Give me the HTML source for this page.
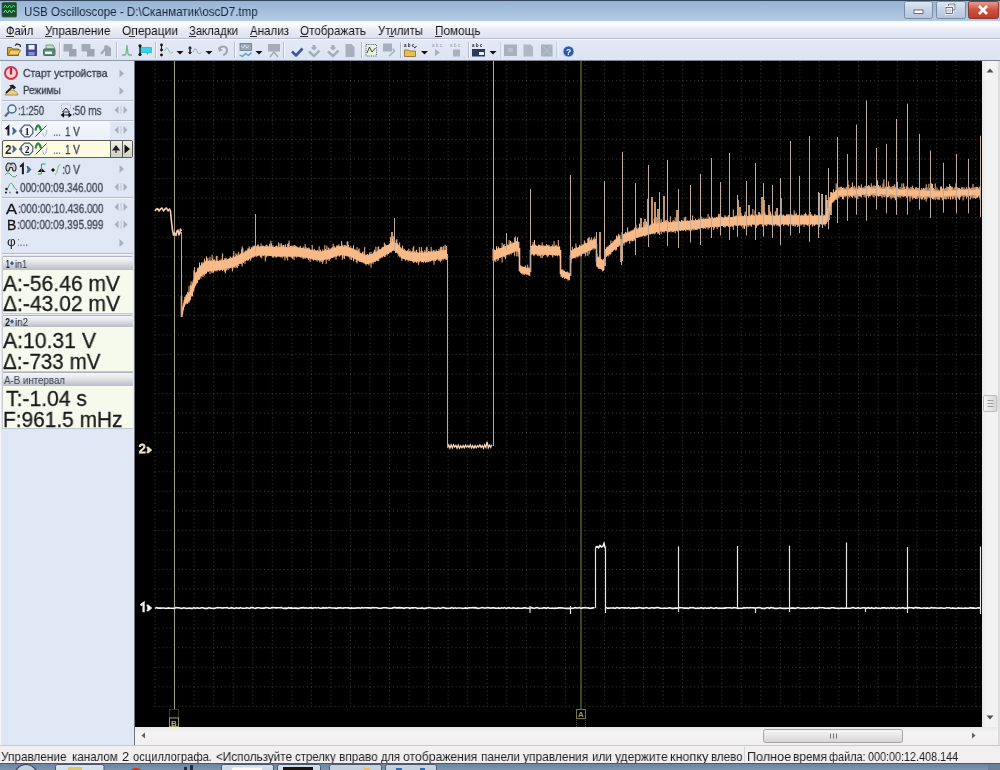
<!DOCTYPE html>
<html><head><meta charset="utf-8">
<style>
*{margin:0;padding:0;box-sizing:border-box}
html,body{width:1000px;height:770px;overflow:hidden;background:#dfe6f4;font-family:"Liberation Sans", sans-serif}
.a{position:absolute}
.t{white-space:nowrap;-webkit-font-smoothing:antialiased;will-change:transform}
</style></head><body>

<div class="a" style="left:0;top:0;width:1000px;height:21px;background:linear-gradient(#97b3d6,#a6bfdd 50%,#b4cbe4);border-top:1px solid #34455a"></div>
<div class="a t" style="left:24.3px;top:4.6px;font-size:13px;line-height:13px;color:#17263a;transform:scaleX(0.8903);transform-origin:0 0;">USB Oscilloscope - D:\Сканматик\oscD7.tmp</div>
<div class="a" style="left:0;top:21px;width:1000px;height:18px;background:linear-gradient(#f4f9fd,#fafcfe 20%,#e9ecf7 50%,#dde1f1);border-bottom:1px solid #b9bece"></div>
<div class="a t" style="left:5.7px;top:24.56px;font-size:12.8px;line-height:12.8px;color:#151515;transform:scaleX(0.8675);transform-origin:0 0;">Файл</div>
<div class="a" style="left:5.5px;top:36px;width:8px;height:1px;background:#333"></div>
<div class="a t" style="left:45px;top:24.56px;font-size:12.8px;line-height:12.8px;color:#151515;transform:scaleX(0.9205);transform-origin:0 0;">Управление</div>
<div class="a" style="left:45px;top:36px;width:6.5px;height:1px;background:#333"></div>
<div class="a t" style="left:122px;top:24.56px;font-size:12.8px;line-height:12.8px;color:#151515;transform:scaleX(0.9353);transform-origin:0 0;">Операции</div>
<div class="a" style="left:128.5px;top:36px;width:6.5px;height:1px;background:#333"></div>
<div class="a t" style="left:189px;top:24.56px;font-size:12.8px;line-height:12.8px;color:#151515;transform:scaleX(0.8845);transform-origin:0 0;">Закладки</div>
<div class="a" style="left:189px;top:36px;width:6.5px;height:1px;background:#333"></div>
<div class="a t" style="left:250px;top:24.56px;font-size:12.8px;line-height:12.8px;color:#151515;transform:scaleX(0.9025);transform-origin:0 0;">Анализ</div>
<div class="a" style="left:250px;top:36px;width:7px;height:1px;background:#333"></div>
<div class="a t" style="left:300px;top:24.56px;font-size:12.8px;line-height:12.8px;color:#151515;transform:scaleX(0.9129);transform-origin:0 0;">Отображать</div>
<div class="a" style="left:300px;top:36px;width:8px;height:1px;background:#333"></div>
<div class="a t" style="left:377.5px;top:24.56px;font-size:12.8px;line-height:12.8px;color:#151515;transform:scaleX(0.8854);transform-origin:0 0;">Утилиты</div>
<div class="a" style="left:389px;top:36px;width:5px;height:1px;background:#333"></div>
<div class="a t" style="left:434.5px;top:24.56px;font-size:12.8px;line-height:12.8px;color:#151515;transform:scaleX(0.9204);transform-origin:0 0;">Помощь</div>
<div class="a" style="left:434.5px;top:36px;width:7.5px;height:1px;background:#333"></div>
<div class="a" style="left:0;top:39px;width:1000px;height:21px;background:linear-gradient(#e4e9f6,#dce3f2);border-top:1px solid #f4f7fd"></div>
<div class="a" style="left:0;top:60px;width:135px;height:685px;background:#dfe6f4;border-top:1px solid #8e97a6;border-right:1px solid #6f7784"></div>
<div class="a" style="left:0;top:61px;width:1px;height:684px;background:#f4f6fa"></div>
<div class="a" style="left:2px;top:100px;width:131px;height:1px;background:#b5bcc8"></div>
<div class="a" style="left:2px;top:101px;width:131px;height:1px;background:#f2f5fa"></div>
<div class="a" style="left:2px;top:120.3px;width:131px;height:1px;background:#b5bcc8"></div>
<div class="a" style="left:2px;top:121.3px;width:131px;height:1px;background:#f2f5fa"></div>
<div class="a" style="left:2px;top:197.3px;width:131px;height:1px;background:#b5bcc8"></div>
<div class="a" style="left:2px;top:198.3px;width:131px;height:1px;background:#f2f5fa"></div>
<div class="a" style="left:2px;top:252.5px;width:131px;height:1px;background:#b5bcc8"></div>
<div class="a" style="left:2px;top:253.5px;width:131px;height:1px;background:#f2f5fa"></div>
<div class="a t" style="left:22.5px;top:67.79px;font-size:11px;line-height:11px;color:#363c4a;transform:scaleX(0.9429);transform-origin:0 0;-webkit-text-stroke:0.3px #363c4a;">Старт устройства</div>
<div class="a t" style="left:22.5px;top:85.09px;font-size:11px;line-height:11px;color:#363c4a;transform:scaleX(0.8967);transform-origin:0 0;-webkit-text-stroke:0.3px #363c4a;">Режимы</div>
<div class="a t" style="left:18px;top:105.34px;font-size:12px;line-height:12px;color:#404858;transform:scaleX(0.7792);transform-origin:0 0;-webkit-text-stroke:0.3px #404858;">:1:250</div>
<div class="a t" style="left:72px;top:105.34px;font-size:12px;line-height:12px;color:#404858;transform:scaleX(0.8191);transform-origin:0 0;-webkit-text-stroke:0.3px #404858;">:50 ms</div>
<div class="a" style="left:2px;top:122px;width:108px;height:18px;background:linear-gradient(#f4f7fc,#e9eff8)"></div>
<div class="a t" style="left:53px;top:125.94px;font-size:12px;line-height:12px;color:#404858;transform:scaleX(0.7998);transform-origin:0 0;">...</div>
<div class="a t" style="left:65px;top:125.54px;font-size:12px;line-height:12px;color:#404858;transform:scaleX(0.8217);transform-origin:0 0;-webkit-text-stroke:0.3px #404858;">1 V</div>
<div class="a" style="left:1.5px;top:140px;width:131px;height:17.5px;background:#fdfbe2;border:1px solid #5c5c58;border-radius:2px"></div>
<div class="a" style="left:110px;top:141px;width:22px;height:15.5px;background:linear-gradient(#f0f0e8,#cfcfc6);border-left:1px solid #5c5c58"></div>
<div class="a" style="left:121.5px;top:141px;width:1px;height:15.5px;background:#5c5c58"></div>
<div class="a t" style="left:4.5px;top:143.1px;font-size:13px;line-height:13px;color:#1a1e26;font-weight:bold;transform:scaleX(0.8991);transform-origin:0 0;">2</div>
<div class="a t" style="left:53px;top:143.94px;font-size:12px;line-height:12px;color:#404858;transform:scaleX(0.7998);transform-origin:0 0;">...</div>
<div class="a t" style="left:65px;top:143.74px;font-size:12px;line-height:12px;color:#404858;transform:scaleX(0.8217);transform-origin:0 0;-webkit-text-stroke:0.3px #404858;">1 V</div>
<div class="a t" style="left:61.5px;top:164.44px;font-size:12px;line-height:12px;color:#404858;transform:scaleX(0.8432);transform-origin:0 0;-webkit-text-stroke:0.3px #404858;">:0 V</div>
<div class="a t" style="left:20px;top:181.74px;font-size:12px;line-height:12px;color:#484e5a;transform:scaleX(0.8292);transform-origin:0 0;-webkit-text-stroke:0.35px #484e5a;">000:00:09.346.000</div>
<div class="a t" style="left:6px;top:201.55px;font-size:14px;line-height:14px;color:#151515;transform:scaleX(1.1779);transform-origin:0 0;-webkit-text-stroke:0.3px #151515;">A</div>
<div class="a t" style="left:17.5px;top:202.94px;font-size:12px;line-height:12px;color:#484e5a;transform:scaleX(0.8266);transform-origin:0 0;-webkit-text-stroke:0.35px #484e5a;">:000:00:10.436.000</div>
<div class="a t" style="left:7px;top:218.05px;font-size:14px;line-height:14px;color:#151515;transform:scaleX(0.9638);transform-origin:0 0;-webkit-text-stroke:0.3px #151515;">B</div>
<div class="a t" style="left:16.5px;top:219.44px;font-size:12px;line-height:12px;color:#484e5a;transform:scaleX(0.8363);transform-origin:0 0;-webkit-text-stroke:0.35px #484e5a;">:000:00:09.395.999</div>
<div class="a t" style="left:6.5px;top:234.67px;font-size:13.5px;line-height:13.5px;color:#1a1a1a;transform:scaleX(0.9710);transform-origin:0 0;">φ</div>
<div class="a t" style="left:17px;top:236.44px;font-size:12px;line-height:12px;color:#606878;transform:scaleX(0.8247);transform-origin:0 0;">:...</div>
<div class="a" style="left:2px;top:256.3px;width:131px;height:13.5px;background:linear-gradient(#f6f6f9,#e6e8ed 35%,#cdd0d7 70%,#b9bdc5);border-top:1px solid #b0b4bc;border-left:1px solid #c8ccd4;border-radius:2px 2px 0 0"></div>
<div class="a" style="left:2px;top:269.8px;width:131px;height:44.2px;background:#f5faec;border-left:1px solid #c8ccd4;border-bottom:1px solid #c4c8d0"></div>
<div class="a t" style="left:3px;top:272.88px;font-size:22px;line-height:22px;color:#1a1a1a;transform:scaleX(0.9568);transform-origin:0 0;-webkit-text-stroke:0.3px #1a1a1a;">A:-56.46 mV</div>
<div class="a t" style="left:3px;top:293.08px;font-size:22px;line-height:22px;color:#1a1a1a;transform:scaleX(0.9567);transform-origin:0 0;-webkit-text-stroke:0.3px #1a1a1a;">Δ:-43.02 mV</div>
<div class="a t" style="left:5.5px;top:258.51px;font-size:10.5px;line-height:10.5px;color:#1a1a1a;font-weight:bold;transform:scaleX(0.5993);transform-origin:0 0;">1</div>
<div class="a t" style="left:15px;top:258.51px;font-size:10.5px;line-height:10.5px;color:#2a3040;transform:scaleX(0.8564);transform-origin:0 0;">in1</div>
<div class="a" style="left:2px;top:314.5px;width:131px;height:12.5px;background:linear-gradient(#f6f6f9,#e6e8ed 35%,#cdd0d7 70%,#b9bdc5);border-top:1px solid #b0b4bc;border-left:1px solid #c8ccd4;border-radius:2px 2px 0 0"></div>
<div class="a" style="left:2px;top:327px;width:131px;height:44.5px;background:#f5faec;border-left:1px solid #c8ccd4;border-bottom:1px solid #c4c8d0"></div>
<div class="a t" style="left:3px;top:330.38px;font-size:22px;line-height:22px;color:#1a1a1a;transform:scaleX(0.9625);transform-origin:0 0;-webkit-text-stroke:0.3px #1a1a1a;">A:10.31 V</div>
<div class="a t" style="left:3px;top:350.88px;font-size:22px;line-height:22px;color:#1a1a1a;transform:scaleX(0.9379);transform-origin:0 0;-webkit-text-stroke:0.3px #1a1a1a;">Δ:-733 mV</div>
<div class="a t" style="left:4.5px;top:316.71px;font-size:10.5px;line-height:10.5px;color:#1a1a1a;font-weight:bold;transform:scaleX(0.8562);transform-origin:0 0;">2</div>
<div class="a t" style="left:15px;top:316.71px;font-size:10.5px;line-height:10.5px;color:#2a3040;transform:scaleX(0.9277);transform-origin:0 0;">in2</div>
<div class="a" style="left:2px;top:372px;width:131px;height:13.5px;background:linear-gradient(#f6f6f9,#e6e8ed 35%,#cdd0d7 70%,#b9bdc5);border-top:1px solid #b0b4bc;border-left:1px solid #c8ccd4;border-radius:2px 2px 0 0"></div>
<div class="a" style="left:2px;top:385.5px;width:131px;height:43px;background:#f5faec;border-left:1px solid #c8ccd4;border-bottom:1px solid #c4c8d0"></div>
<div class="a t" style="left:5.5px;top:388.38px;font-size:22px;line-height:22px;color:#1a1a1a;transform:scaleX(0.9601);transform-origin:0 0;-webkit-text-stroke:0.3px #1a1a1a;">T:-1.04 s</div>
<div class="a t" style="left:3px;top:408.78px;font-size:22px;line-height:22px;color:#1a1a1a;transform:scaleX(0.9489);transform-origin:0 0;-webkit-text-stroke:0.3px #1a1a1a;">F:961.5 mHz</div>
<div class="a t" style="left:3.5px;top:374.71px;font-size:10.5px;line-height:10.5px;color:#3a4050;transform:scaleX(0.9259);transform-origin:0 0;">A-B интервал</div>
<svg class="a" style="left:0;top:0" width="140" height="400"><path d="M10 263.3 l2 -2.3 l2 2.3 l-2 2.3z" fill="#3a5a90"/><path d="M10 321.5 l2 -2.3 l2 2.3 l-2 2.3z" fill="#3a5a90"/></svg>
<svg class="a" style="left:0;top:0" width="1000" height="770" viewBox="0 0 1000 770">
<rect x="135" y="61" width="847" height="666" fill="#000"/>
<g stroke="#404040" stroke-width="1" fill="none">
<line x1="155.04" y1="61" x2="155.04" y2="707" stroke-dasharray="1 2.91" stroke-dashoffset="3.71"/>
<line x1="174.58" y1="61" x2="174.58" y2="707" stroke-dasharray="1 2.91" stroke-dashoffset="3.71"/>
<line x1="194.12" y1="61" x2="194.12" y2="707" stroke-dasharray="1 2.91" stroke-dashoffset="3.71"/>
<line x1="213.66" y1="61" x2="213.66" y2="707" stroke-dasharray="1 2.91" stroke-dashoffset="3.71"/>
<line x1="233.2" y1="61" x2="233.2" y2="707" stroke-dasharray="1 2.91" stroke-dashoffset="3.71"/>
<line x1="252.74" y1="61" x2="252.74" y2="707" stroke-dasharray="1 2.91" stroke-dashoffset="3.71"/>
<line x1="272.28" y1="61" x2="272.28" y2="707" stroke-dasharray="1 2.91" stroke-dashoffset="3.71"/>
<line x1="291.82" y1="61" x2="291.82" y2="707" stroke-dasharray="1 2.91" stroke-dashoffset="3.71"/>
<line x1="311.36" y1="61" x2="311.36" y2="707" stroke-dasharray="1 2.91" stroke-dashoffset="3.71"/>
<line x1="330.9" y1="61" x2="330.9" y2="707" stroke-dasharray="1 2.91" stroke-dashoffset="3.71"/>
<line x1="350.44" y1="61" x2="350.44" y2="707" stroke-dasharray="1 2.91" stroke-dashoffset="3.71"/>
<line x1="369.98" y1="61" x2="369.98" y2="707" stroke-dasharray="1 2.91" stroke-dashoffset="3.71"/>
<line x1="389.52" y1="61" x2="389.52" y2="707" stroke-dasharray="1 2.91" stroke-dashoffset="3.71"/>
<line x1="409.06" y1="61" x2="409.06" y2="707" stroke-dasharray="1 2.91" stroke-dashoffset="3.71"/>
<line x1="428.6" y1="61" x2="428.6" y2="707" stroke-dasharray="1 2.91" stroke-dashoffset="3.71"/>
<line x1="448.14" y1="61" x2="448.14" y2="707" stroke-dasharray="1 2.91" stroke-dashoffset="3.71"/>
<line x1="467.68" y1="61" x2="467.68" y2="707" stroke-dasharray="1 2.91" stroke-dashoffset="3.71"/>
<line x1="487.22" y1="61" x2="487.22" y2="707" stroke-dasharray="1 2.91" stroke-dashoffset="3.71"/>
<line x1="506.76" y1="61" x2="506.76" y2="707" stroke-dasharray="1 2.91" stroke-dashoffset="3.71"/>
<line x1="526.3" y1="61" x2="526.3" y2="707" stroke-dasharray="1 2.91" stroke-dashoffset="3.71"/>
<line x1="545.84" y1="61" x2="545.84" y2="707" stroke-dasharray="1 2.91" stroke-dashoffset="3.71"/>
<line x1="565.38" y1="61" x2="565.38" y2="707" stroke-dasharray="1 2.91" stroke-dashoffset="3.71"/>
<line x1="584.92" y1="61" x2="584.92" y2="707" stroke-dasharray="1 2.91" stroke-dashoffset="3.71"/>
<line x1="604.46" y1="61" x2="604.46" y2="707" stroke-dasharray="1 2.91" stroke-dashoffset="3.71"/>
<line x1="624" y1="61" x2="624" y2="707" stroke-dasharray="1 2.91" stroke-dashoffset="3.71"/>
<line x1="643.54" y1="61" x2="643.54" y2="707" stroke-dasharray="1 2.91" stroke-dashoffset="3.71"/>
<line x1="663.08" y1="61" x2="663.08" y2="707" stroke-dasharray="1 2.91" stroke-dashoffset="3.71"/>
<line x1="682.62" y1="61" x2="682.62" y2="707" stroke-dasharray="1 2.91" stroke-dashoffset="3.71"/>
<line x1="702.16" y1="61" x2="702.16" y2="707" stroke-dasharray="1 2.91" stroke-dashoffset="3.71"/>
<line x1="721.7" y1="61" x2="721.7" y2="707" stroke-dasharray="1 2.91" stroke-dashoffset="3.71"/>
<line x1="741.24" y1="61" x2="741.24" y2="707" stroke-dasharray="1 2.91" stroke-dashoffset="3.71"/>
<line x1="760.78" y1="61" x2="760.78" y2="707" stroke-dasharray="1 2.91" stroke-dashoffset="3.71"/>
<line x1="780.32" y1="61" x2="780.32" y2="707" stroke-dasharray="1 2.91" stroke-dashoffset="3.71"/>
<line x1="799.86" y1="61" x2="799.86" y2="707" stroke-dasharray="1 2.91" stroke-dashoffset="3.71"/>
<line x1="819.4" y1="61" x2="819.4" y2="707" stroke-dasharray="1 2.91" stroke-dashoffset="3.71"/>
<line x1="838.94" y1="61" x2="838.94" y2="707" stroke-dasharray="1 2.91" stroke-dashoffset="3.71"/>
<line x1="858.48" y1="61" x2="858.48" y2="707" stroke-dasharray="1 2.91" stroke-dashoffset="3.71"/>
<line x1="878.02" y1="61" x2="878.02" y2="707" stroke-dasharray="1 2.91" stroke-dashoffset="3.71"/>
<line x1="897.56" y1="61" x2="897.56" y2="707" stroke-dasharray="1 2.91" stroke-dashoffset="3.71"/>
<line x1="917.1" y1="61" x2="917.1" y2="707" stroke-dasharray="1 2.91" stroke-dashoffset="3.71"/>
<line x1="936.64" y1="61" x2="936.64" y2="707" stroke-dasharray="1 2.91" stroke-dashoffset="3.71"/>
<line x1="956.18" y1="61" x2="956.18" y2="707" stroke-dasharray="1 2.91" stroke-dashoffset="3.71"/>
<line x1="975.72" y1="61" x2="975.72" y2="707" stroke-dasharray="1 2.91" stroke-dashoffset="3.71"/>
<line x1="154.54" y1="80.75" x2="981" y2="80.75" stroke-dasharray="1 2.91"/>
<line x1="154.54" y1="100.3" x2="981" y2="100.3" stroke-dasharray="1 2.91"/>
<line x1="154.54" y1="119.85" x2="981" y2="119.85" stroke-dasharray="1 2.91"/>
<line x1="154.54" y1="139.4" x2="981" y2="139.4" stroke-dasharray="1 2.91"/>
<line x1="154.54" y1="158.95" x2="981" y2="158.95" stroke-dasharray="1 2.91"/>
<line x1="154.54" y1="178.5" x2="981" y2="178.5" stroke-dasharray="1 2.91"/>
<line x1="154.54" y1="198.05" x2="981" y2="198.05" stroke-dasharray="1 2.91"/>
<line x1="154.54" y1="217.6" x2="981" y2="217.6" stroke-dasharray="1 2.91"/>
<line x1="154.54" y1="237.15" x2="981" y2="237.15" stroke-dasharray="1 2.91"/>
<line x1="154.54" y1="256.7" x2="981" y2="256.7" stroke-dasharray="1 2.91"/>
<line x1="154.54" y1="276.25" x2="981" y2="276.25" stroke-dasharray="1 2.91"/>
<line x1="154.54" y1="295.8" x2="981" y2="295.8" stroke-dasharray="1 2.91"/>
<line x1="154.54" y1="315.35" x2="981" y2="315.35" stroke-dasharray="1 2.91"/>
<line x1="154.54" y1="334.9" x2="981" y2="334.9" stroke-dasharray="1 2.91"/>
<line x1="154.54" y1="354.45" x2="981" y2="354.45" stroke-dasharray="1 2.91"/>
<line x1="154.54" y1="374" x2="981" y2="374" stroke-dasharray="1 2.91"/>
<line x1="154.54" y1="393.55" x2="981" y2="393.55" stroke-dasharray="1 2.91"/>
<line x1="154.54" y1="413.1" x2="981" y2="413.1" stroke-dasharray="1 2.91"/>
<line x1="154.54" y1="432.65" x2="981" y2="432.65" stroke-dasharray="1 2.91"/>
<line x1="154.54" y1="452.2" x2="981" y2="452.2" stroke-dasharray="1 2.91"/>
<line x1="154.54" y1="471.75" x2="981" y2="471.75" stroke-dasharray="1 2.91"/>
<line x1="154.54" y1="491.3" x2="981" y2="491.3" stroke-dasharray="1 2.91"/>
<line x1="154.54" y1="510.85" x2="981" y2="510.85" stroke-dasharray="1 2.91"/>
<line x1="154.54" y1="530.4" x2="981" y2="530.4" stroke-dasharray="1 2.91"/>
<line x1="154.54" y1="549.95" x2="981" y2="549.95" stroke-dasharray="1 2.91"/>
<line x1="154.54" y1="569.5" x2="981" y2="569.5" stroke-dasharray="1 2.91"/>
<line x1="154.54" y1="589.05" x2="981" y2="589.05" stroke-dasharray="1 2.91"/>
<line x1="154.54" y1="608.6" x2="981" y2="608.6" stroke-dasharray="1 2.91"/>
<line x1="154.54" y1="628.15" x2="981" y2="628.15" stroke-dasharray="1 2.91"/>
<line x1="154.54" y1="647.7" x2="981" y2="647.7" stroke-dasharray="1 2.91"/>
<line x1="154.54" y1="667.25" x2="981" y2="667.25" stroke-dasharray="1 2.91"/>
<line x1="154.54" y1="686.8" x2="981" y2="686.8" stroke-dasharray="1 2.91"/>
<line x1="154.54" y1="706.35" x2="981" y2="706.35" stroke-dasharray="1 2.91"/>
</g>
<line x1="174.5" y1="61" x2="174.5" y2="709" stroke="#9c9a88" stroke-width="1.1"/>
<line x1="581" y1="61" x2="581" y2="709" stroke="#6e6e3c" stroke-width="1.2"/>
<polyline points="447.5,447.8 448.7,445 449.9,448.1 451.1,444.8 452.3,448 453.5,444.8 454.7,447.1 455.9,445.3 457.1,448.2 458.3,445.1 459.5,448.2 460.7,445.8 461.9,447.7 463.1,445.6 464.3,447.8 465.5,445.2 466.7,447.1 467.9,445.6 469.1,447.4 470.3,444.8 471.5,448 472.7,445.7 473.9,448.1 475.1,445.7 476.3,447.8 477.5,445.7 478.7,447.1 479.9,444.9 481.1,447.4 482.3,445.6 483.5,448.3 484.7,444.9 485.9,447.4 487.1,442 488.3,447.7 489.5,445.1 490.7,447.3 491.9,444.8" fill="none" stroke="#f4d4bc" stroke-width="1.3"/>
<polyline points="155,211 156,209.5 157.5,208.5 159,211 160.5,209 162,208 163.5,211 165,209 166.5,208 168,211 169.5,209 170.5,211 171.5,222 172.5,230 173.5,235 174.5,233 176,235.5 177,231 178,230 179,235 180,233 180.5,229 181.5,231" fill="none" stroke="#f4cdb0" stroke-width="1.6" stroke-linejoin="round"/>
<path d="M182 311.2 L184 301.3 L186 295.3 L188 293.2 L190 291.1 L192 284.6 L194 278 L196 273.1 L198 269.7 L200 266.4 L202 264.8 L204 263.3 L206 261.7 L208 261 L210 261.1 L212 261.2 L214 261.4 L216 261.3 L218 261 L220 260.7 L222 260.4 L224 260.1 L226 259.7 L228 259.1 L230 258.5 L232 257.9 L234 257.3 L236 256.5 L238 255.5 L240 254.5 L242 253.5 L244 252.5 L246 251.4 L248 250.3 L250 249.3 L252 248.2 L254 247.1 L256 246.5 L258 246.5 L260 246.5 L262 246.5 L264 246.5 L266 246.6 L268 246.7 L270 246.9 L272 247 L274 247.1 L276 247.3 L278 247.4 L280 247.5 L282 247.6 L284 247.6 L286 247.6 L288 247.6 L290 247.6 L292 247.6 L294 247.6 L296 247.6 L298 247.6 L300 247.6 L302 248 L304 248.4 L306 248.8 L308 249.2 L310 249.6 L312 250 L314 250.4 L316 250.8 L318 251.2 L320 251.6 L322 251.2 L324 250.8 L326 250.4 L328 250 L330 249.6 L332 248.9 L334 248.2 L336 247.5 L338 246.8 L340 246.1 L342 246.4 L344 246.7 L346 247 L348 247.4 L350 247.7 L352 248.7 L354 249.7 L356 250.7 L358 251.7 L360 252.6 L362 253.4 L364 254.3 L366 255.2 L368 255.3 L370 254.6 L372 253.8 L374 253.1 L376 252.1 L378 250.8 L380 249.6 L382 248.3 L384 247.1 L386 246 L388 244.9 L390 243.7 L392 242.7 L394 241.7 L396 243.1 L398 244.9 L400 247.3 L402 249.7 L404 250.3 L406 250.9 L408 251.5 L410 252.1 L412 252.7 L414 252.8 L416 252.8 L418 252.8 L420 252.8 L422 252.8 L424 252.8 L426 252.6 L428 252.4 L430 252.1 L432 251.8 L434 251.6 L436 251.3 L438 251.1 L440 250.8 L442 250.5 L444 250.2 L446 249.9 L447 249.8 L447 258.2 L446 258.3 L444 258.6 L442 258.9 L440 259.2 L438 259.5 L436 259.7 L434 260 L432 260.3 L430 260.6 L428 260.8 L426 261.1 L424 261.2 L422 261.2 L420 261.2 L418 261.2 L416 261.2 L414 261.2 L412 261.3 L410 260.7 L408 260.1 L406 259.5 L404 258.9 L402 258.3 L400 255.9 L398 253.5 L396 251.6 L394 250.3 L392 251.3 L390 252.3 L388 253.4 L386 254.6 L384 255.7 L382 256.9 L380 258.2 L378 259.4 L376 260.7 L374 261.7 L372 262.4 L370 263.2 L368 263.9 L366 263.9 L364 263 L362 262.1 L360 261.2 L358 260.3 L356 259.3 L354 258.3 L352 257.3 L350 256.3 L348 256 L346 255.8 L344 255.5 L342 255.2 L340 254.9 L338 255.6 L336 256.3 L334 257 L332 257.7 L330 258.4 L328 258.8 L326 259.2 L324 259.6 L322 260 L320 260.4 L318 260 L316 259.6 L314 259.2 L312 258.8 L310 258.4 L308 258 L306 257.6 L304 257.2 L302 256.8 L300 256.4 L298 256.4 L296 256.4 L294 256.4 L292 256.4 L290 256.4 L288 256.4 L286 256.4 L284 256.4 L282 256.4 L280 256.5 L278 256.3 L276 256.2 L274 256.1 L272 255.9 L270 255.8 L268 255.7 L266 255.5 L264 255.5 L262 255.5 L260 255.5 L258 255.5 L256 255.5 L254 256 L252 257.1 L250 258.2 L248 259.4 L246 260.5 L244 261.5 L242 262.5 L240 263.5 L238 264.5 L236 265.5 L234 266.3 L232 266.9 L230 267.5 L228 268.1 L226 268.7 L224 269.2 L222 269.5 L220 269.8 L218 270.1 L216 270.4 L214 270.6 L212 270.8 L210 270.9 L208 271 L206 272 L204 273.9 L202 275.7 L200 277.6 L198 280.7 L196 283.7 L194 288.4 L192 294.6 L190 300.9 L188 302 L186 303.1 L184 308 L182 316.8ZM493 251.4 L495 250.6 L497 249.8 L499 248.9 L501 248.1 L503 247.3 L505 246.4 L507 245.6 L509 244.8 L511 243.9 L513 243.1 L515 242.3 L517 241.4 L519 243.4 L519 252.6 L517 250.6 L515 251.4 L513 252.2 L511 253.1 L509 253.9 L507 254.7 L505 255.6 L503 256.4 L501 257.2 L499 258.1 L497 258.9 L495 259.7 L493 260.6ZM520 265.9 L522 266.5 L524 267.1 L526 267.7 L528 268.2 L530 268.9 L530 275.1 L528 274.5 L526 273.9 L524 273.3 L522 272.8 L520 272.1ZM531 245.8 L533 245.9 L535 245.9 L537 246 L539 246.1 L541 246.1 L543 246.2 L545 246.3 L547 246.4 L549 246.4 L551 246.5 L553 246.6 L555 246.6 L557 246.7 L559 246.8 L560 246.8 L560 255.2 L559 255.2 L557 255.1 L555 255 L553 255 L551 254.9 L549 254.8 L547 254.8 L545 254.7 L543 254.6 L541 254.5 L539 254.5 L537 254.4 L535 254.3 L533 254.3 L531 254.2ZM561 269.9 L563 270.7 L565 271.6 L567 272.5 L569 273.4 L570 273.9 L570 280.1 L569 279.7 L567 278.8 L565 277.9 L563 277 L561 276.1ZM571 250.8 L573 249.8 L575 248.9 L577 247.9 L579 247 L581 246 L583 245 L585 244.1 L587 243.1 L589 242.2 L591 241.2 L593 240.2 L595 239.3 L596 238.8 L596 247.2 L595 247.7 L593 248.6 L591 249.6 L589 250.6 L587 251.5 L585 252.5 L583 253.4 L581 254.4 L579 255.4 L577 256.3 L575 257.3 L573 258.2 L571 259.2ZM597 257.1 L599 258.2 L601 259.4 L603 260.5 L604 261.1 L604 270.9 L603 270.3 L601 269.2 L599 268 L597 266.9ZM606 248.8 L608 246.9 L610 245.1 L612 243.2 L614 241.4 L616 239.5 L618 237.7 L620 235.8 L620 244.2 L618 246.1 L616 247.9 L614 249.8 L612 251.6 L610 253.5 L608 255.3 L606 257.2ZM622 234.8 L624 234.1 L626 233.4 L628 232.6 L630 231.9 L632 231.2 L634 230.5 L636 229.7 L638 229 L640 228.3 L642 227.8 L644 227.2 L646 226.7 L648 226.1 L650 225.6 L652 225 L654 224.5 L656 223.9 L658 223.4 L660 222.8 L662 222.7 L664 222.6 L666 222.5 L668 222.4 L670 222.3 L672 222.2 L674 222.1 L676 222 L678 221.9 L680 221.8 L682 221.6 L684 221.4 L686 221.2 L688 221 L690 220.8 L692 220.6 L694 220.4 L696 220.2 L698 220 L700 219.8 L702 219.6 L704 219.4 L706 219.1 L708 218.9 L710 218.7 L712 218.5 L714 218.2 L716 218 L718 217.8 L720 217.7 L722 217.6 L724 217.5 L726 217.4 L728 217.3 L730 217.2 L732 217.1 L734 217 L736 216.9 L738 216.8 L740 216.8 L742 216.7 L744 216.6 L746 216.5 L748 216.4 L750 216.3 L752 216.2 L754 216.1 L756 216 L758 215.9 L760 215.8 L762 215.8 L764 215.8 L766 215.8 L768 215.8 L770 215.8 L772 215.8 L774 215.8 L776 215.8 L778 215.8 L780 215.8 L782 215.8 L784 215.8 L786 215.8 L788 215.8 L790 215.8 L792 215.8 L794 215.8 L796 215.8 L798 215.8 L800 215.8 L802 215.8 L804 215.8 L806 215.8 L808 215.8 L810 215.8 L812 215.8 L814 215.8 L816 215.8 L818 215.8 L820 215.8 L822 215.8 L824 215.8 L826 215.8 L828 207.8 L830 199.1 L832 193.9 L834 192.2 L836 190.5 L838 188.8 L838 197.2 L836 198.9 L834 200.6 L832 202.3 L830 207.5 L828 216.2 L826 224.2 L824 224.2 L822 224.2 L820 224.2 L818 224.2 L816 224.2 L814 224.2 L812 224.2 L810 224.2 L808 224.2 L806 224.2 L804 224.2 L802 224.2 L800 224.2 L798 224.2 L796 224.2 L794 224.2 L792 224.2 L790 224.2 L788 224.2 L786 224.2 L784 224.2 L782 224.2 L780 224.2 L778 224.2 L776 224.2 L774 224.2 L772 224.2 L770 224.2 L768 224.2 L766 224.2 L764 224.2 L762 224.2 L760 224.2 L758 224.3 L756 224.4 L754 224.5 L752 224.6 L750 224.7 L748 224.8 L746 224.9 L744 225 L742 225.1 L740 225.2 L738 225.2 L736 225.3 L734 225.4 L732 225.5 L730 225.6 L728 225.7 L726 225.8 L724 225.9 L722 226 L720 226.1 L718 226.2 L716 226.4 L714 226.6 L712 226.9 L710 227.1 L708 227.3 L706 227.5 L704 227.8 L702 228 L700 228.2 L698 228.4 L696 228.6 L694 228.8 L692 229 L690 229.2 L688 229.4 L686 229.6 L684 229.8 L682 230 L680 230.2 L678 230.3 L676 230.4 L674 230.5 L672 230.6 L670 230.7 L668 230.8 L666 230.9 L664 231 L662 231.1 L660 231.2 L658 231.8 L656 232.3 L654 232.8 L652 233.4 L650 233.9 L648 234.5 L646 235 L644 235.6 L642 236.1 L640 236.7 L638 237.4 L636 238.1 L634 238.9 L632 239.6 L630 240.3 L628 241 L626 241.8 L624 242.5 L622 243.2ZM838 190.4 L840 190.3 L842 190.2 L844 190.1 L846 190 L848 189.8 L850 189.7 L852 189.6 L854 189.5 L856 189.4 L858 189.3 L860 189.2 L862 189.1 L864 189 L866 188.8 L868 188.7 L870 188.6 L872 188.5 L874 188.4 L876 188.5 L878 188.6 L880 188.7 L882 188.9 L884 189 L886 189.1 L888 189.2 L890 189.3 L892 189.4 L894 189.6 L896 189.7 L898 189.8 L900 189.9 L902 190 L904 190.1 L906 190.1 L908 190.2 L910 190.3 L912 190.4 L914 190.5 L916 190.5 L918 190.6 L920 190.7 L922 190.8 L924 190.8 L926 190.9 L928 191 L930 191.1 L932 191.2 L934 191.2 L936 191.3 L938 191.4 L940 191.3 L942 191.1 L944 191 L946 190.9 L948 190.7 L950 190.6 L952 190.4 L954 190.3 L956 190.2 L958 190 L960 189.9 L962 189.9 L964 189.9 L966 189.9 L968 189.9 L970 189.9 L972 189.9 L974 189.9 L976 189.9 L978 189.9 L980 189.9 L981 189.9 L981 195.1 L980 195.1 L978 195.1 L976 195.1 L974 195.1 L972 195.1 L970 195.1 L968 195.1 L966 195.1 L964 195.1 L962 195.1 L960 195.1 L958 195.2 L956 195.4 L954 195.5 L952 195.6 L950 195.8 L948 195.9 L946 196.1 L944 196.2 L942 196.3 L940 196.5 L938 196.6 L936 196.5 L934 196.4 L932 196.4 L930 196.3 L928 196.2 L926 196.1 L924 196 L922 196 L920 195.9 L918 195.8 L916 195.7 L914 195.7 L912 195.6 L910 195.5 L908 195.4 L906 195.3 L904 195.3 L902 195.2 L900 195.1 L898 195 L896 194.9 L894 194.8 L892 194.6 L890 194.5 L888 194.4 L886 194.3 L884 194.2 L882 194.1 L880 193.9 L878 193.8 L876 193.7 L874 193.6 L872 193.7 L870 193.8 L868 193.9 L866 194 L864 194.2 L862 194.3 L860 194.4 L858 194.5 L856 194.6 L854 194.7 L852 194.8 L850 194.9 L848 195 L846 195.2 L844 195.3 L842 195.4 L840 195.5 L838 195.6Z" fill="#f8ba88"/>
<path d="M182 311.1V317.1M182.7 306.4V314.1M183.4 303.4V309.9M184.1 300.1V306.7M184.8 296.8V305M185.5 296.8V302.8M186.2 295V304.2M186.9 294.1V303.3M187.6 291.8V304M188.3 293.1V301.3M189 286.1V302.9M189.7 292.8V300.4M190.4 285V299.6M191.1 281.4V296.3M191.8 286.2V294.7M192.5 283.7V296.4M193.2 280.3V292.1M193.9 270.5V291M194.6 267.1V287.8M195.3 272.8V286.3M196 272.1V284.5M196.7 271.6V283.4M197.4 268.5V283.2M198.1 267.5V279.7M198.8 267.6V279.5M199.5 262.5V279.6M200.2 266.7V276.8M200.9 265.1V278.6M201.6 262.5V275.3M202.3 263.4V275.3M203 262.1V277.1M203.7 262.8V273.2M204.4 258.7V275.6M205.1 261.1V274.1M205.8 260.6V274.1M206.5 256.4V273.5M207.2 259.2V271.2M207.9 257.9V271.9M208.6 262.1V271.9M209.3 259.9V270.9M210 257V274.2M210.7 260.9V270.3M211.4 260.5V272.6M212.1 254.7V270.1M212.8 258.2V273.2M213.5 260V272.4M214.2 259.2V270.3M214.9 260V271.6M215.6 261.8V270.6M216.3 255.9V270.7M217 256V271.5M217.7 260.5V269.9M218.4 260.8V268.9M219.1 262V270.7M219.8 259.9V271.1M220.5 261.3V270M221.2 258.7V268.9M221.9 260V270.2M222.6 253.4V271M223.3 261.1V269.5M224 260.2V269.7M224.7 258.2V271.7M225.4 258.5V273.4M226.1 257.8V270.6M226.8 259.7V270.1M227.5 260.2V268.4M228.2 258.7V269.8M228.9 259.5V267.7M229.6 258.2V268.7M230.3 256.6V268M231 257.8V266.9M231.7 257.6V268.4M232.4 257.8V271.5M233.1 255.7V268.3M233.8 250.9V267M234.5 257.1V267.5M235.2 255.9V264.8M235.9 253.3V268.1M236.6 254.8V266.8M237.3 256.5V268.3M238 253.7V263.9M238.7 251.8V266M239.4 255.3V263.2M240.1 254.5V263.7M240.8 253.3V263.9M241.5 249.5V264.2M242.2 246.3V266.6M242.9 248.1V261.2M243.6 253.7V263.1M244.3 253.2V261.5M245 251.1V263.8M245.7 250.5V261M246.4 252.2V259.1M247.1 250V259M247.8 248.5V261.2M248.5 248.5V260.2M249.2 246.4V259.3M249.9 250V258.5M250.6 249.6V260.7M251.3 247.2V258.5M252 248.1V257.8M252.7 246.5V256.3M253.4 246.2V257.7M254.1 245.5V256.9M254.8 245.9V256.6M255.5 247.8V255.3M256.2 247.1V257.2M256.9 245.7V256M257.6 244.6V256.3M258.3 244.7V254.3M259 246.7V255.5M259.7 247.5V255M260.4 246.2V257.3M261.1 243.5V256.8M261.8 246.2V258.3M262.5 245.8V254.4M263.2 245.6V256.1M263.9 246V255.1M264.6 247.6V255M265.3 246.6V261.5M266 244.9V254.5M266.7 244.6V257.4M267.4 245.7V255.8M268.1 246.1V254.8M268.8 247.4V255.5M269.5 243.8V255.9M270.2 245.7V256.2M270.9 240.8V255.3M271.6 243.3V255.8M272.3 246.4V257M273 245.2V257.7M273.7 247.5V257.4M274.4 248.2V255.1M275.1 246.5V256.6M275.8 246.1V257.6M276.5 245.5V257.4M277.2 246.1V256.2M277.9 247.6V256.8M278.6 242.5V256.3M279.3 247V256.7M280 243.6V255.8M280.7 246.4V257.4M281.4 243.3V256.3M282.1 245.9V258.2M282.8 245.3V256.1M283.5 245.1V256M284.2 245.5V256.4M284.9 247.1V260.4M285.6 244.3V256.1M286.3 247V258.2M287 248.6V256.9M287.7 243.9V260.5M288.4 243.1V255.9M289.1 240.5V256.4M289.8 247.3V256.9M290.5 245.9V256.5M291.2 246.1V257.7M291.9 245.8V257.2M292.6 246.3V258.9M293.3 245.4V256.4M294 247.3V260.1M294.7 245V255.7M295.4 245.7V255.5M296.1 246.4V257M296.8 246.4V257.6M297.5 247.3V256M298.2 247.8V256.9M298.9 248.1V255.3M299.6 247.6V256.8M300.3 245.8V257.3M301 247.9V257.9M301.7 248.3V256M302.4 247.7V257.6M303.1 247.8V259.2M303.8 246.5V258.5M304.5 249.4V257.6M305.2 244.1V258.9M305.9 247.1V257.9M306.6 248.5V257M307.3 248V256.9M308 248.3V258.9M308.7 247.5V260.1M309.4 248.5V257.8M310.1 250.8V262M310.8 250.1V258.5M311.5 250.1V258.7M312.2 245V259.9M312.9 249.2V258.9M313.6 251.3V260.7M314.3 248.8V259.9M315 250.6V258.4M315.7 250.4V260.3M316.4 250.9V260.2M317.1 250.1V261.6M317.8 249.8V258.8M318.5 252.2V260M319.2 246.4V260.9M319.9 251.1V262.5M320.6 249.6V260.6M321.3 252V261.9M322 251.7V260.5M322.7 249.4V263.9M323.4 251.8V261.3M324.1 250.3V259.1M324.8 245.1V260.1M325.5 249V258.8M326.2 251V263.9M326.9 245.7V259.8M327.6 250.2V259.6M328.3 247.7V259.1M329 247.7V261.1M329.7 250.5V260.2M330.4 249.4V258.9M331.1 248.1V258.3M331.8 247.6V257.8M332.5 247.2V257.9M333.2 243.6V257M333.9 247.2V257.6M334.6 246.2V255.7M335.3 247.8V255.4M336 247.7V259.6M336.7 245.5V256.9M337.4 245.8V255.2M338.1 245.2V255.9M338.8 244.3V254M339.5 247.4V256.6M340.2 246.3V255.5M340.9 246.6V255.3M341.6 240.9V254.5M342.3 245.7V259.9M343 244.7V258.1M343.7 247.8V254.5M344.4 245.2V259.1M345.1 244.9V255.8M345.8 245.7V255.1M346.5 245.9V255.7M347.2 241.3V255.4M347.9 241.7V256.8M348.6 244.8V256.5M349.3 247.5V257.5M350 248.1V259.5M350.7 246.2V255.6M351.4 248.4V260M352.1 247.9V257.3M352.8 248.7V258.1M353.5 245.3V261.4M354.2 250.3V258.6M354.9 248.9V259.7M355.6 250.2V258M356.3 250.1V262M357 247.1V263.5M357.7 251V260.7M358.4 249.7V259.4M359.1 248.4V261.7M359.8 253.2V262M360.5 253.5V261.5M361.2 254.2V262M361.9 254.2V262.5M362.6 251.7V261.6M363.3 255V261.6M364 251.4V263.4M364.7 247.1V263.2M365.4 256.1V264.1M366.1 254.4V265.4M366.8 255.4V264.2M367.5 254.1V263.6M368.2 254.6V263.3M368.9 254.8V265.4M369.6 252.4V263.3M370.3 254.4V261.9M371 251.8V267.6M371.7 254V263.7M372.4 254.8V262M373.1 253.6V263.8M373.8 251.5V261.1M374.5 249.7V261.9M375.2 251.3V262M375.9 246.6V261.1M376.6 251.9V259.7M377.3 250.7V261.1M378 247.1V261M378.7 246.2V261.2M379.4 249.3V257.5M380.1 249.9V257.4M380.8 249.7V258.5M381.5 248.6V256.5M382.2 246.8V257.7M382.9 247.3V256.4M383.6 247.1V255.7M384.3 242.7V257M385 243.9V256.9M385.7 245V255.4M386.4 245.7V254M387.1 245.3V255.5M387.8 245.2V253.6M388.5 245.1V254M389.2 244.2V252.3M389.9 243.3V253M390.6 236.9V251.8M391.3 242.1V252.5M392 241.4V250.5M392.7 238.4V250.8M393.4 242.3V250.1M394.1 242.6V249.3M394.8 243.1V251M395.5 243.4V253M396.2 239.7V253M396.9 239.2V252M397.6 243.1V253.5M398.3 244.6V255.8M399 245.3V254.2M399.7 242.4V257.3M400.4 247.1V256.3M401.1 249.7V258.1M401.8 247.8V261.1M402.5 245.7V258.3M403.2 250.4V258.6M403.9 248.5V258.8M404.6 249.2V258.3M405.3 250.5V260.9M406 251.4V260.1M406.7 251.2V259.2M407.4 250.2V258.9M408.1 252.2V261.5M408.8 248.7V260.3M409.5 251.3V260.1M410.2 250.4V260.8M410.9 253V260.3M411.6 251.6V261M412.3 251V260.1M413 247.6V262.3M413.7 246.1V263M414.4 251.8V262.2M415.1 250.7V261.2M415.8 252.4V262M416.5 249.7V262.7M417.2 252.2V262.6M417.9 252.7V260.1M418.6 253V264.9M419.3 247.1V262.3M420 251.1V260.7M420.7 253.4V260.9M421.4 247.1V262.3M422.1 250.5V262M422.8 251.4V261.9M423.5 253.6V262.6M424.2 251.6V261.3M424.9 249.9V261.6M425.6 252.1V262.7M426.3 247.5V262.1M427 246.6V262.4M427.7 252.9V262.2M428.4 251V262M429.1 253.2V262.1M429.8 250.9V260.7M430.5 252.7V261.4M431.2 246.9V260.7M431.9 250.7V260.8M432.6 252.5V260.1M433.3 250.1V261.4M434 250.2V264.8M434.7 252.1V260.6M435.4 252V261.1M436.1 249.4V260.4M436.8 251.9V258.8M437.5 251.9V258.7M438.2 251.2V258.8M438.9 248.9V260.9M439.6 250.8V260.5M440.3 247.4V262.2M441 246.6V260.5M441.7 247.1V260.6M442.4 250.3V257.9M443.1 247.3V260.4M443.8 245.9V258.7M444.5 250.1V258.4M445.2 244.7V259.5M445.9 250V259.3M446.6 246V259.9M493 248.6V260.8M493.7 249.3V262.1M494.4 249.5V260.8M495.1 251.7V259.9M495.8 250V262M496.5 246.1V258.1M497.2 248.6V258.3M497.9 248.2V261M498.6 246.5V259.8M499.3 248.4V257M500 248.2V256.8M500.7 247.9V257.8M501.4 249.1V256.5M502.1 242.8V262.5M502.8 247V256.5M503.5 245.1V256.2M504.2 243.9V257M504.9 246.8V257.4M505.6 246.9V259.2M506.3 246.1V255.3M507 243.8V255.3M507.7 245.3V254.1M508.4 245.1V254.2M509.1 240.1V255.3M509.8 243.9V253.5M510.5 240.8V253.5M511.2 245.1V254.6M511.9 241.8V252.6M512.6 243.6V253.1M513.3 242.7V252.5M514 243.2V251.4M514.7 237.9V255.9M515.4 236.4V251M516.1 241V251.6M516.8 241V256.3M517.5 237.3V251.6M518.2 241.7V256.4M518.9 241.9V253.6M520 266.5V272M520.7 265.1V273M521.4 266.5V273.8M522.1 266.9V272.8M522.8 267.3V274.6M523.5 267V273.8M524.2 266.5V275.1M524.9 267.3V274.4M525.6 265.6V274.1M526.3 267.8V274.5M527 267.8V274.9M527.7 264.7V274.1M528.4 267.7V274.7M529.1 267.3V276M529.8 268.7V275.9M531 246.9V255.1M531.7 246V253.5M532.4 244.6V253.5M533.1 242V254.9M533.8 244.4V255.9M534.5 239.9V255.3M535.2 244.6V253.9M535.9 244.9V253.9M536.6 246.3V254M537.3 246.7V255.8M538 245.6V255.4M538.7 244.5V255.6M539.4 245V255.7M540.1 245.1V256.1M540.8 246.3V257.7M541.5 245.4V254.9M542.2 242.5V258.2M542.9 247.2V253.5M543.6 245.4V256M544.3 245.6V255M545 246V254.1M545.7 246V253.7M546.4 244.1V255.2M547.1 245.4V256.4M547.8 244.8V257.2M548.5 245.8V255.7M549.2 244.8V253.9M549.9 247.6V254M550.6 247.6V253.8M551.3 246.1V255.4M552 247.7V253.9M552.7 244.5V257.5M553.4 247V255.5M554.1 241.1V255.3M554.8 247.1V255.3M555.5 245.5V255.8M556.2 244.7V254.4M556.9 245.7V255.9M557.6 247.4V256.2M558.3 240V255.1M559 246.8V254.4M559.7 246.5V256.4M561 269.1V277.1M561.7 270.2V275.8M562.4 269.4V278M563.1 269.6V276.5M563.8 271.6V276.8M564.5 270.7V278.9M565.2 272.3V277.8M565.9 272V278.4M566.6 272V279M567.3 271.4V278.2M568 272.1V280.8M568.7 272.9V279.3M569.4 273.4V280.3M571 251.4V263.3M571.7 250.3V257.8M572.4 246.9V257.4M573.1 249V258.4M573.8 250.5V257.4M574.5 248.1V258.2M575.2 248.2V257.2M575.9 243.4V258.4M576.6 246.7V255.8M577.3 248.1V256.9M578 248.1V257.5M578.7 247.3V256M579.4 244.9V255.1M580.1 245.9V256.6M580.8 245.9V255.2M581.5 245.6V256.1M582.2 244.2V253.4M582.9 245V254M583.6 244.5V252.8M584.3 240.4V252.2M585 242.3V254M585.7 242.8V256.2M586.4 243.7V252.4M587.1 243.2V252.6M587.8 238.5V255.9M588.5 238.1V250.5M589.2 237.1V254.3M589.9 240.6V251.3M590.6 239.8V250.5M591.3 237.4V250.1M592 239.6V250M592.7 240.8V248.1M593.4 238.4V248.2M594.1 240V249.8M594.8 236.6V247.6M595.5 240.1V248.8M597 253.5V266.9M597.7 256.7V266.1M598.4 257.1V268.9M599.1 256.3V267.1M599.8 257.4V269M600.5 257.3V268.4M601.2 259.1V268.7M601.9 259.4V269.3M602.6 260.6V271.4M603.3 258.9V270.6M604 258.9V269.7M606 248.7V256.4M606.7 247.1V256.6M607.4 246.9V254.9M608.1 245.7V254.1M608.8 247.1V256.3M609.5 245V254.1M610.2 245.4V254.7M610.9 240.5V254.1M611.6 243.5V251.9M612.3 243.2V252M613 241.2V250.9M613.7 241.5V250M614.4 239.8V249.4M615.1 240.7V249.7M615.8 238.9V250.7M616.5 235.6V249.9M617.2 237.3V247M617.9 236V247M618.6 233.7V246.8M619.3 235.4V245.9M620 234.9V244.7M622 232.4V244.3M622.7 234.9V243.4M623.4 235V243.4M624.1 234.4V245.2M624.8 233.6V242.6M625.5 231.9V242.2M626.2 232.4V242.6M626.9 233.4V241.9M627.6 227.4V240.4M628.3 232.9V240.3M629 231.3V240.3M629.7 233.1V243.8M630.4 230.9V240.9M631.1 231.8V240M631.8 230.3V241.4M632.5 230.6V241.1M633.2 229.5V241.2M633.9 229.6V238.4M634.6 227.7V240.6M635.3 231V239.7M636 224.8V237.1M636.7 228.1V236.9M637.4 229.9V237.3M638.1 227.3V237.6M638.8 228.4V237.1M639.5 223.6V236.5M640.2 227.9V236.4M640.9 227.4V237.2M641.6 227.8V236.2M642.3 227.3V236.5M643 228V234.7M643.7 222.1V235.3M644.4 226.2V236.4M645.1 226.9V235.8M645.8 224.8V236.4M646.5 221.6V235.3M647.2 224.5V233.8M647.9 224.3V235.2M648.6 225.8V235.4M649.3 226.4V234.3M650 226.1V234.1M650.7 224.5V234.5M651.4 225.7V232.6M652.1 220.9V233.8M652.8 223.5V234.2M653.5 223.4V233.2M654.2 218.6V234.3M654.9 221.7V234.2M655.6 222.7V233M656.3 217.1V231.7M657 224.1V231.4M657.7 222.5V233.6M658.4 223.3V233.6M659.1 223.1V231.8M659.8 220.8V231M660.5 223.4V231.5M661.2 219.1V233.8M661.9 223.8V230.5M662.6 222V232.1M663.3 223.5V232.3M664 221.2V230.9M664.7 221.9V232.5M665.4 220.7V230.2M666.1 220.2V230.8M666.8 220.2V231.6M667.5 223.6V232.3M668.2 221.1V232.4M668.9 222.4V232M669.6 222.6V231.8M670.3 216.3V230M671 223.1V232.4M671.7 222.3V231.2M672.4 221.6V232M673.1 220.4V232.2M673.8 220.5V231.7M674.5 221.1V231.1M675.2 217.4V233.1M675.9 222.6V230.9M676.6 222.2V230M677.3 221.5V231.3M678 220.5V231.9M678.7 221.9V230M679.4 221V229.5M680.1 222.4V230.8M680.8 222.4V231.1M681.5 219.9V229M682.2 220.3V230.8M682.9 221.6V229.3M683.6 220.9V230.7M684.3 217.4V229.6M685 219.8V230.2M685.7 216.8V231.4M686.4 221V228.4M687.1 220.5V229.9M687.8 220.4V230.3M688.5 221.3V229.5M689.2 220.9V230.8M689.9 220.6V229.8M690.6 221.6V230M691.3 220.1V230.2M692 220.7V230.5M692.7 215.5V228.1M693.4 220.3V229.7M694.1 221.3V230.4M694.8 221.2V227.6M695.5 218.7V229.8M696.2 220V230M696.9 221.1V230.1M697.6 220.3V229.4M698.3 219.3V228.7M699 218.5V227.8M699.7 220.5V229.3M700.4 219.7V229M701.1 216.4V227.2M701.8 218.7V227.9M702.5 218.9V227.1M703.2 218.8V229M703.9 217.7V227.8M704.6 219.3V227.6M705.3 219.4V229M706 217.8V227.5M706.7 219.3V226.6M707.4 219.1V227.3M708.1 214V229.6M708.8 218.5V227.4M709.5 216.7V228.1M710.2 218.9V226.4M710.9 218V225.8M711.6 218.8V225.8M712.3 216.7V226.7M713 217.8V227.2M713.7 219.2V229.9M714.4 217.7V228.1M715.1 217.4V226.7M715.8 218.8V226.8M716.5 217V227.2M717.2 216.6V229.2M717.9 218.1V226.3M718.6 213.8V227.3M719.3 214.2V226.9M720 216.6V226.7M720.7 217.3V225.5M721.4 216.6V225.2M722.1 217.1V224.8M722.8 217.6V225.2M723.5 218.2V227M724.2 217.8V225.1M724.9 215.2V227.9M725.6 216.5V227M726.3 217.2V225.7M727 216.4V225.6M727.7 217.3V225.6M728.4 215.1V227M729.1 217.5V224.9M729.8 217.3V225M730.5 217.7V226.7M731.2 217.4V226.7M731.9 217V225.4M732.6 217.5V226.7M733.3 209.5V229.8M734 217.9V225.1M734.7 216.2V224.8M735.4 216.1V224.3M736.1 215.3V226.2M736.8 215.9V225.8M737.5 216.4V225.3M738.2 216.5V226.1M738.9 216.7V224.2M739.6 216.5V224M740.3 216.5V225.5M741 212.8V225.4M741.7 215.5V226.4M742.4 215.8V225.2M743.1 216.2V228.6M743.8 215.9V226.5M744.5 214.7V229M745.2 211.6V226.1M745.9 215.5V226.3M746.6 217.4V229.4M747.3 216V223.7M748 217.3V227.1M748.7 216.1V225.6M749.4 216.1V224.8M750.1 214.7V226.4M750.8 216.1V225.4M751.5 214.4V226.6M752.2 214.5V223.5M752.9 209V224.1M753.6 215.2V224.7M754.3 215.7V224.1M755 210.6V225.4M755.7 214.3V226.1M756.4 214.6V227.9M757.1 214.6V225.7M757.8 215.6V225.8M758.5 215V225.1M759.2 215.1V223.2M759.9 213.4V224.4M760.6 214.4V223.5M761.3 216.3V224.2M762 215V223.1M762.7 214.1V226.7M763.4 216.8V225M764.1 215.2V225.4M764.8 211.8V224.4M765.5 214.4V224.8M766.2 215.1V226M766.9 214.7V226M767.6 215.1V223M768.3 215.8V224.2M769 215.8V223.4M769.7 214.6V225.2M770.4 211.5V223M771.1 213.8V225.1M771.8 216.1V225.4M772.5 215.2V225.7M773.2 214.8V225.5M773.9 216.5V224.7M774.6 216.6V225.9M775.3 211.4V224.2M776 216.3V223.9M776.7 215V225.7M777.4 214.2V225.2M778.1 216.8V225.5M778.8 215.4V226.3M779.5 214.5V226.5M780.2 216.9V224.6M780.9 216.7V225.2M781.6 214.7V224.7M782.3 216.2V223.9M783 214.7V224.1M783.7 214.7V226.1M784.4 216.9V224.8M785.1 216V224.7M785.8 215.7V224.1M786.5 214.5V224.6M787.2 214.4V225.1M787.9 214.4V225.2M788.6 214.3V226.3M789.3 214.3V223.2M790 215.7V223.2M790.7 213.4V225.8M791.4 214.6V224.4M792.1 214.6V223M792.8 214.9V226M793.5 215.6V225.9M794.2 210.5V223.1M794.9 214.4V226.4M795.6 214.1V226.3M796.3 212.7V224.5M797 215.2V224.9M797.7 215.1V227.1M798.4 215V225.4M799.1 214.5V226M799.8 216.8V225.3M800.5 216.1V224.3M801.2 214.7V225.6M801.9 215.1V223.2M802.6 215.5V224.3M803.3 216.8V224.3M804 214.4V227M804.7 214V224.3M805.4 212.7V224.3M806.1 213.9V224.7M806.8 215.2V225.1M807.5 215.7V225.5M808.2 216.2V223.1M808.9 214.2V226.4M809.6 212.4V225M810.3 212.1V225.2M811 214.7V223.8M811.7 214.3V224M812.4 216.2V226.5M813.1 216.3V225.7M813.8 216.2V224.1M814.5 214.5V225.9M815.2 214.3V224.7M815.9 216.3V224.9M816.6 215.2V223.1M817.3 215.4V224.6M818 215V224.7M818.7 215.7V225.7M819.4 215.3V227.2M820.1 216.5V223.7M820.8 215.4V223.5M821.5 215.1V224.4M822.2 212.4V225.1M822.9 214.1V224.8M823.6 216.1V224.1M824.3 214.8V223.6M825 215.5V226M825.7 216.7V223.1M826.4 213.6V223.7M827.1 210.8V220.5M827.8 208.1V216.1M828.5 205.5V216.8M829.2 202.7V212.4M829.9 200.3V211.4M830.6 197.7V206.7M831.3 193.1V203.1M832 192.5V201.5M832.7 192.9V202.9M833.4 189.3V201.7M834.1 193.2V201.3M834.8 192.3V199.4M835.5 190.3V199M836.2 183.4V200M836.9 189.9V197.7M837.6 188.3V197.1M838 186.9V197.7M838.9 188V198M839.8 187.2V196.5M840.7 186.7V197M841.6 186.8V196.6M842.5 187.9V199.1M843.4 187.5V199.5M844.3 187.8V196.3M845.2 188.7V197.4M846.1 187.2V196.1M847 187V196.5M847.9 180.3V198.9M848.8 184.8V196.2M849.7 188.4V197.4M850.6 187.6V196M851.5 187V196.9M852.4 182.3V198.1M853.3 187.3V196M854.2 185.8V196.8M855.1 187.3V197.8M856 188.3V197.4M856.9 186.7V196.9M857.8 188.6V199.2M858.7 185.5V196.4M859.6 186.3V196.4M860.5 187.6V196.6M861.4 184.3V197.6M862.3 188V195M863.2 187.2V194.9M864.1 187.8V197.3M865 185.8V195.5M865.9 186.2V197.7M866.8 186.2V196.1M867.7 186V195.9M868.6 185.2V197.8M869.5 185.7V196.3M870.4 187.1V196.4M871.3 183.3V195.2M872.2 186.8V195.4M873.1 185.7V196.8M874 185.4V197.4M874.9 185.7V195.3M875.8 186V196M876.7 181.1V197.5M877.6 180.3V195.8M878.5 185V196.7M879.4 186.5V196.2M880.3 185.5V195.9M881.2 188V196.6M882.1 186.9V197.8M883 183.5V195.4M883.9 179.4V197M884.8 187.7V197.4M885.7 186.6V195.8M886.6 186.9V196.9M887.5 186.8V197.4M888.4 181.4V197.2M889.3 185.9V195.9M890.2 187.1V197.6M891.1 186.6V199.3M892 187.6V197.6M892.9 186V197.6M893.8 185.9V197.3M894.7 184.2V198.3M895.6 187.4V200.3M896.5 188.3V197.6M897.4 181.7V196.5M898.3 188.4V197.4M899.2 188.9V196.8M900.1 187V198.4M901 188.7V196.7M901.9 183.4V196.4M902.8 187.8V196.8M903.7 183.3V197.1M904.6 186.7V196.3M905.5 189V196.2M906.4 186.3V197.8M907.3 188V196.6M908.2 187.3V196.2M909.1 188.1V197M910 188.7V201.6M910.9 186.8V197.9M911.8 187.5V196.6M912.7 185.6V199.5M913.6 188V198M914.5 189.3V197.9M915.4 187.5V198.9M916.3 187.2V198.8M917.2 188.1V198.8M918.1 187.7V196.7M919 188V198.1M919.9 189.5V197.2M920.8 189.9V198.6M921.7 187.8V199.7M922.6 189.4V199.4M923.5 188V197.5M924.4 188.7V199.7M925.3 187.8V199.2M926.2 184.3V201.6M927.1 187.4V198.9M928 190V197M928.9 183.8V197.6M929.8 188.1V197.7M930.7 189.3V200.1M931.6 183.3V197.9M932.5 184V198.9M933.4 187.9V199.5M934.3 189.1V198.6M935.2 183.5V200.2M936.1 189.5V197.3M937 187.6V199M937.9 190.2V199.8M938.8 189.5V199.6M939.7 190.5V199.7M940.6 186.6V197.3M941.5 186.5V197.7M942.4 188.5V200.3M943.3 188.5V197.9M944.2 189.1V198.7M945.1 188.3V199.2M946 187.8V199.3M946.9 186.5V199.2M947.8 186.9V197.2M948.7 187V199.1M949.6 184V196.6M950.5 186V199.6M951.4 186.7V196.6M952.3 186.7V199.3M953.2 189.4V198.8M954.1 187.9V196.4M955 187V198.2M955.9 183.3V200.1M956.8 189.1V197.9M957.7 187.4V197.2M958.6 188.1V198.6M959.5 188.1V199.8M960.4 189.1V197.4M961.3 187.5V196.4M962.2 187V195.9M963.1 188.7V200.5M964 187.2V197.1M964.9 188.6V196.3M965.8 188.8V196.5M966.7 187V198.6M967.6 188.6V196.8M968.5 186.8V197.6M969.4 187.4V196M970.3 188.8V199.6M971.2 187.7V197.7M972.1 187.7V196.5M973 183.9V198.4M973.9 187.9V198.2M974.8 187.3V198.1M975.7 187.3V198.7M976.6 186.8V198M977.5 187.1V197.5M978.4 188.3V196.4M979.3 186.6V197.8M980.2 188V200.1" stroke="#f8ba88" stroke-width="1" fill="none"/>
<g stroke="#f8ba88" stroke-width="1.6">
<line x1="181.5" y1="296" x2="181.5" y2="317"/>
<line x1="519.5" y1="248" x2="519.5" y2="271"/>
<line x1="530.5" y1="250" x2="530.5" y2="272"/>
<line x1="560.5" y1="250" x2="560.5" y2="274"/>
<line x1="570.5" y1="255" x2="570.5" y2="276"/>
<line x1="596.5" y1="244" x2="596.5" y2="262"/>
<line x1="605" y1="249" x2="605" y2="266"/>
<line x1="621" y1="239" x2="621" y2="262"/>
<line x1="827" y1="222" x2="827" y2="200"/>
<line x1="829" y1="220" x2="829" y2="197"/>
<line x1="831" y1="215" x2="831" y2="192"/>
<line x1="600" y1="232" x2="600" y2="262"/>
<line x1="641" y1="218" x2="641" y2="235"/>
<line x1="645" y1="219" x2="645" y2="233"/>
<line x1="648" y1="199" x2="648" y2="233"/>
<line x1="652" y1="197" x2="652" y2="232"/>
<line x1="655" y1="202" x2="655" y2="231"/>
<line x1="658" y1="209" x2="658" y2="230"/>
<line x1="664" y1="196" x2="664" y2="229"/>
<line x1="677" y1="210" x2="677" y2="228"/>
<line x1="738" y1="200" x2="738" y2="222"/>
<line x1="740" y1="207" x2="740" y2="222"/>
<line x1="749" y1="205" x2="749" y2="222"/>
<line x1="759" y1="212" x2="759" y2="222"/>
<line x1="762" y1="197" x2="762" y2="222"/>
<line x1="764" y1="200" x2="764" y2="222"/>
<line x1="769" y1="205" x2="769" y2="222"/>
<line x1="777" y1="208" x2="777" y2="222"/>
<line x1="781" y1="198" x2="781" y2="222"/>
<line x1="819" y1="193" x2="819" y2="222"/>
<line x1="822" y1="194" x2="822" y2="222"/>
<line x1="826" y1="195" x2="826" y2="222"/>
<line x1="392" y1="232" x2="392" y2="250"/>
<line x1="394" y1="236" x2="394" y2="250"/>
</g>
<g stroke="#bfab9d" stroke-width="1">
<line x1="181.5" y1="232" x2="181.5" y2="317"/>
<line x1="447.5" y1="254" x2="447.5" y2="446"/>
<line x1="493.5" y1="61" x2="493.5" y2="446"/>
<line x1="255.5" y1="214" x2="255.5" y2="251"/>
<line x1="394.5" y1="218" x2="394.5" y2="250"/>
<line x1="506.5" y1="233" x2="506.5" y2="250"/>
<line x1="530.5" y1="189" x2="530.5" y2="272"/>
<line x1="570.5" y1="175" x2="570.5" y2="276"/>
<line x1="596.5" y1="232" x2="596.5" y2="266"/>
<line x1="604.5" y1="181" x2="604.5" y2="259"/>
<line x1="621.5" y1="239" x2="621.5" y2="265"/>
<line x1="622.5" y1="152" x2="622.5" y2="261"/>
<line x1="635.5" y1="183" x2="635.5" y2="255"/>
<line x1="648.5" y1="165" x2="648.5" y2="247"/>
<line x1="659.5" y1="192" x2="659.5" y2="235"/>
<line x1="667.5" y1="160" x2="667.5" y2="246"/>
<line x1="678.5" y1="189" x2="678.5" y2="248"/>
<line x1="690.5" y1="185" x2="690.5" y2="242.5"/>
<line x1="700.5" y1="174" x2="700.5" y2="245"/>
<line x1="711.5" y1="158" x2="711.5" y2="238"/>
<line x1="720.5" y1="182" x2="720.5" y2="235.5"/>
<line x1="729.5" y1="153" x2="729.5" y2="240"/>
<line x1="737.5" y1="195" x2="737.5" y2="236.7"/>
<line x1="746.5" y1="181" x2="746.5" y2="235.5"/>
<line x1="755.5" y1="163" x2="755.5" y2="240"/>
<line x1="763.5" y1="183" x2="763.5" y2="236.7"/>
<line x1="772.5" y1="185" x2="772.5" y2="238"/>
<line x1="780.5" y1="178" x2="780.5" y2="245"/>
<line x1="790.5" y1="141" x2="790.5" y2="235.6"/>
<line x1="799.5" y1="176" x2="799.5" y2="233"/>
<line x1="809.5" y1="136" x2="809.5" y2="241.8"/>
<line x1="818.5" y1="192" x2="818.5" y2="238"/>
<line x1="822.5" y1="194" x2="822.5" y2="228"/>
<line x1="828.5" y1="168" x2="828.5" y2="229.4"/>
<line x1="837.5" y1="137" x2="837.5" y2="223"/>
<line x1="847.5" y1="154" x2="847.5" y2="220.8"/>
<line x1="856.5" y1="124.5" x2="856.5" y2="214.7"/>
<line x1="866.5" y1="100.4" x2="866.5" y2="220.8"/>
<line x1="876.5" y1="148" x2="876.5" y2="209.7"/>
<line x1="886.5" y1="143.8" x2="886.5" y2="213.4"/>
<line x1="896.5" y1="119" x2="896.5" y2="214.7"/>
<line x1="907.5" y1="103.6" x2="907.5" y2="214.7"/>
<line x1="919.5" y1="134" x2="919.5" y2="209.7"/>
<line x1="930.5" y1="150.5" x2="930.5" y2="218"/>
<line x1="943.5" y1="162.8" x2="943.5" y2="212.7"/>
<line x1="956.5" y1="154" x2="956.5" y2="213.4"/>
<line x1="968.5" y1="159" x2="968.5" y2="213.4"/>
<line x1="980.5" y1="135.7" x2="980.5" y2="217"/>
</g>
<g fill="none" stroke="#f4f4f4" stroke-width="1.6">
<polyline points="155,608.4 156.5,607.6 158,608.1 159.5,608.1 161,608.1 162.5,608 164,608 165.5,608.4 167,608.3 168.5,607.9 170,608.3 171.5,608.2 173,608.3 174.5,608.4 176,607.6 177.5,607.7 179,607.8 180.5,608.3 182,608.4 183.5,607.8 185,608 186.5,608.4 188,608.2 189.5,608.1 191,608.4 192.5,608.4 194,607.6 195.5,608.4 197,607.8 198.5,608.1 200,608.2 201.5,607.8 203,607.8 204.5,608.4 206,608.3 207.5,608.4 209,607.6 210.5,608.1 212,608.2 213.5,608.4 215,608.2 216.5,607.8 218,607.6 219.5,607.7 221,607.8 222.5,608.1 224,607.8 225.5,607.7 227,607.6 228.5,608.2 230,608.3 231.5,607.7 233,608 234.5,608.4 236,607.9 237.5,608 239,608.3 240.5,607.6 242,608.3 243.5,608.2 245,608.2 246.5,607.9 248,608 249.5,608.4 251,607.6 252.5,607.6 254,608.1 255.5,608.4 257,607.7 258.5,607.7 260,608 261.5,608.3 263,608.1 264.5,608.1 266,607.6 267.5,607.7 269,608.1 270.5,608.2 272,607.6 273.5,607.6 275,607.8 276.5,607.9 278,607.8 279.5,607.7 281,607.6 282.5,608.1 284,608.4 285.5,608.1 287,608.4 288.5,607.7 290,608.1 291.5,607.9 293,608.3 294.5,608.1 296,608.1 297.5,608.4 299,608.4 300.5,607.7 302,607.9 303.5,607.6 305,608.1 306.5,607.8 308,608.2 309.5,607.9 311,607.6 312.5,608.3 314,607.7 315.5,607.8 317,608 318.5,607.6 320,608.2 321.5,608.2 323,607.7 324.5,608.1 326,607.7 327.5,608 329,607.6 330.5,607.8 332,608 333.5,608 335,608.1 336.5,608.4 338,607.9 339.5,607.9 341,607.7 342.5,608.2 344,607.9 345.5,607.7 347,607.7 348.5,607.9 350,608.3 351.5,607.9 353,608.3 354.5,608 356,608.1 357.5,607.8 359,607.9 360.5,608.2 362,607.6 363.5,608 365,607.8 366.5,607.8 368,607.9 369.5,607.7 371,608.1 372.5,607.6 374,607.8 375.5,607.8 377,607.7 378.5,608.3 380,608.2 381.5,608.3 383,607.7 384.5,607.7 386,607.8 387.5,608 389,608.3 390.5,608.3 392,608.3 393.5,607.6 395,607.6 396.5,607.9 398,607.9 399.5,607.6 401,607.9 402.5,607.7 404,608.3 405.5,607.7 407,607.8 408.5,607.7 410,608.3 411.5,607.7 413,607.9 414.5,607.7 416,607.8 417.5,608.4 419,608.2 420.5,608.2 422,607.9 423.5,608.4 425,608.4 426.5,608.1 428,607.8 429.5,607.6 431,608 432.5,608 434,608.3 435.5,608.4 437,608.3 438.5,607.8 440,608.4 441.5,608.1 443,607.6 444.5,607.7 446,608.4 447.5,608.3 449,608.2 450.5,608.1 452,607.6 453.5,608.4 455,607.8 456.5,608.2 458,608 459.5,608 461,608 462.5,608.4 464,608.3 465.5,607.9 467,608.3 468.5,607.7 470,607.9 471.5,607.8 473,607.6 474.5,607.9 476,607.6 477.5,608.4 479,608.3 480.5,608 482,607.6 483.5,607.8 485,608.2 486.5,607.8 488,607.6 489.5,607.9 491,608.1 492.5,607.7 494,607.9 495.5,608.1 497,608.2 498.5,607.9 500,608.4 501.5,607.8 503,608.2 504.5,607.6 506,608.4 507.5,608 509,607.7 510.5,608.3 512,608.3 513.5,607.7 515,608.3 516.5,608.4 518,607.9 519.5,608.3 521,608.2 522.5,608.1 524,607.9 525.5,607.8 527,608.3 528.5,608.3 530,608.4 531.5,607.6 533,608.1 534.5,608.2 536,607.7 537.5,607.6 539,608.4 540.5,608.3 542,608.2 543.5,607.8 545,607.9 546.5,608.3 548,607.6 549.5,608.2 551,608.2 552.5,608 554,608.4 555.5,608.1 557,608.3 558.5,607.7 560,607.9 561.5,607.8 563,608 564.5,608.2 566,608.4 567.5,608.4 569,608.3 570.5,608.4 572,608.2 573.5,608.2 575,607.6 576.5,607.9 578,608 579.5,607.6 581,608.4 582.5,607.9 584,607.8 585.5,607.6 587,608 588.5,607.9 590,608.4 591.5,608.1 593,607.9 594.5,607.7"/>
<polyline points="595.5,547.5 597,546.5 598.5,547.8 600,545.5 601.5,547 603,546 604,543.5 605,547.5 605.5,548"/>
<polyline points="606,607.6 607.5,608.2 609,608.1 610.5,608 612,608 613.5,607.9 615,608.4 616.5,607.6 618,607.8 619.5,608.3 621,607.8 622.5,607.8 624,607.9 625.5,607.8 627,608.2 628.5,607.6 630,608.1 631.5,608.2 633,607.9 634.5,608.2 636,607.9 637.5,608.1 639,607.6 640.5,607.8 642,608.1 643.5,608.1 645,608 646.5,607.6 648,608 649.5,608.3 651,607.8 652.5,607.7 654,608.1 655.5,607.8 657,607.6 658.5,607.6 660,608.1 661.5,608.3 663,608.2 664.5,608.1 666,608.3 667.5,608.3 669,607.8 670.5,607.9 672,608.4 673.5,608.4 675,608.1 676.5,608.1 678,607.9 679.5,607.6 681,607.8 682.5,607.8 684,608.1 685.5,608.1 687,608.1 688.5,608.4 690,607.6 691.5,607.7 693,607.6 694.5,607.9 696,608.4 697.5,608 699,608.3 700.5,607.7 702,607.9 703.5,608.3 705,607.8 706.5,608.2 708,608.1 709.5,608.1 711,607.6 712.5,607.9 714,608.4 715.5,607.9 717,607.8 718.5,608.4 720,608.1 721.5,608.2 723,608 724.5,608.1 726,607.9 727.5,607.8 729,607.8 730.5,607.8 732,608.2 733.5,607.6 735,607.7 736.5,608 738,608.4 739.5,608.3 741,608.2 742.5,608.2 744,607.7 745.5,608 747,607.6 748.5,608 750,607.6 751.5,607.7 753,607.7 754.5,607.9 756,608 757.5,607.7 759,607.6 760.5,607.7 762,608.4 763.5,608.4 765,608.4 766.5,607.7 768,607.7 769.5,608.3 771,607.6 772.5,607.7 774,608.1 775.5,608.4 777,608.4 778.5,608.3 780,607.8 781.5,608.2 783,608.4 784.5,608.4 786,608.4 787.5,608.2 789,608.3 790.5,608.2 792,607.9 793.5,608.1 795,608.4 796.5,608.1 798,607.6 799.5,608 801,608.3 802.5,608.2 804,608 805.5,608.4 807,608.2 808.5,607.8 810,608.2 811.5,608.3 813,607.6 814.5,608.4 816,607.9 817.5,608.3 819,607.6 820.5,607.8 822,607.8 823.5,607.7 825,608.1 826.5,608.3 828,608.1 829.5,608.4 831,607.7 832.5,607.8 834,607.9 835.5,608.3 837,608.2 838.5,608.4 840,608.3 841.5,608 843,608.2 844.5,608.3 846,608 847.5,608.2 849,608.3 850.5,608.3 852,607.7 853.5,607.6 855,608.2 856.5,608.3 858,607.7 859.5,608.3 861,608.2 862.5,607.7 864,607.7 865.5,608.1 867,608.1 868.5,607.7 870,608.4 871.5,607.7 873,608.3 874.5,608.4 876,607.7 877.5,608.2 879,608 880.5,608.4 882,607.9 883.5,607.9 885,607.8 886.5,608.3 888,607.8 889.5,608.4 891,607.6 892.5,608.3 894,607.6 895.5,608.2 897,608.4 898.5,607.8 900,608.1 901.5,607.9 903,607.6 904.5,608.3 906,608 907.5,608.3 909,607.6 910.5,607.7 912,607.8 913.5,608.3 915,607.6 916.5,607.6 918,607.9 919.5,607.9 921,608.3 922.5,608.3 924,607.8 925.5,608.2 927,607.9 928.5,608.2 930,608.1 931.5,607.6 933,608 934.5,607.9 936,608 937.5,608 939,608.2 940.5,607.9 942,608 943.5,608.3 945,608.2 946.5,607.7 948,607.7 949.5,607.8 951,608.4 952.5,607.9 954,608.3 955.5,608.4 957,608.2 958.5,607.9 960,608.2 961.5,608 963,608.4 964.5,608 966,608.1 967.5,608.2 969,608.1 970.5,607.7 972,608.1 973.5,607.9 975,608.2 976.5,608.2 978,607.7 979.5,607.9 981,607.8"/>
</g><g stroke="#e4e4e4" stroke-width="1.2">
<line x1="595.5" y1="547.5" x2="595.5" y2="608"/>
<line x1="605.5" y1="547.5" x2="605.5" y2="608"/>
<line x1="678.5" y1="546.4" x2="678.5" y2="608"/>
<line x1="737.5" y1="546" x2="737.5" y2="608"/>
<line x1="789.5" y1="545.8" x2="789.5" y2="608"/>
<line x1="846.5" y1="542.5" x2="846.5" y2="608"/>
<line x1="907.5" y1="547" x2="907.5" y2="608"/>
<line x1="980.5" y1="546.5" x2="980.5" y2="608"/>
<line x1="530" y1="606" x2="530" y2="613"/>
<line x1="570.5" y1="606" x2="570.5" y2="614"/>
<line x1="605.5" y1="608" x2="605.5" y2="613"/>
<line x1="678.5" y1="608" x2="678.5" y2="612"/>
<line x1="755.5" y1="608" x2="755.5" y2="613"/>
<line x1="789.5" y1="608" x2="789.5" y2="612"/>
<line x1="865.5" y1="608" x2="865.5" y2="612"/>
<line x1="907.5" y1="608" x2="907.5" y2="613"/>
<line x1="980.5" y1="608" x2="980.5" y2="614"/>
</g>
<rect x="169.5" y="709.5" width="9" height="8.5" fill="none" stroke="#8a8660" stroke-width="0.8" stroke-dasharray="1 1"/>
<rect x="169.5" y="718" width="9" height="8.5" fill="#000" stroke="#9a9660" stroke-width="1"/>
<text x="174" y="725.5" font-size="8" fill="#b8b070" text-anchor="middle" font-family="Liberation Sans" font-weight="bold">B</text>
<rect x="576.5" y="709.5" width="9" height="9" fill="#000" stroke="#78784a" stroke-width="1"/>
<text x="581" y="717" font-size="8" fill="#9a9a60" text-anchor="middle" font-family="Liberation Sans" font-weight="bold">A</text>
<rect x="576.5" y="719" width="9" height="8" fill="none" stroke="#5a5a3a" stroke-width="0.8" stroke-dasharray="1 1"/>
<text x="138.8" y="453.4" font-size="12.5" fill="#f2dcd2" font-family="Liberation Sans" stroke="#f2dcd2" stroke-width="1">2</text>
<path d="M146.8 447 h1.5 l3.5 3 l-3.5 3 h-1.5 l1 -3z" fill="#f0e4c0" stroke="#f0e4c0" stroke-width="0.7" stroke-linejoin="round"/>
<path d="M143.6 612.2 V603 L140.6 605.4" fill="none" stroke="#f4f4f4" stroke-width="2.2"/>
<path d="M146.8 605 h1.5 l3.5 3 l-3.5 3 h-1.5 l1 -3z" fill="#f4f4f4" stroke="#f4f4f4" stroke-width="0.7" stroke-linejoin="round"/>
</svg>
<svg class="a" style="left:0;top:0" width="1000" height="770" viewBox="0 0 1000 770"><defs>
<linearGradient id="gb" x1="0" y1="0" x2="0" y2="1"><stop offset="0" stop-color="#dfe8f4"/><stop offset="0.5" stop-color="#c4d2e4"/><stop offset="1" stop-color="#b4c4da"/></linearGradient>
<linearGradient id="gr" x1="0" y1="0" x2="0" y2="1"><stop offset="0" stop-color="#e8a090"/><stop offset="0.5" stop-color="#d0503e"/><stop offset="1" stop-color="#b83a28"/></linearGradient>
</defs><rect x="2" y="2.5" width="14.5" height="14.5" rx="1" fill="#1d4a30" stroke="#3a5a48" stroke-width="0.8"/>
<path d="M3.5 8 l2 -3 l2 3 l2 -3 l2 3 l2 -3 l1.5 2" fill="none" stroke="#3ad870" stroke-width="1"/>
<path d="M3.5 13 l2 -3 l2 3 l2 -3 l2 3 l2 -3 l1.5 2" fill="none" stroke="#58f090" stroke-width="1"/>
<rect x="904.5" y="1.5" width="28" height="17" rx="2" fill="url(#gb)" stroke="#7a8ca4" stroke-width="1"/>
<rect x="914" y="10" width="9" height="3.5" fill="#fff" stroke="#44526a" stroke-width="0.8"/>
<rect x="936.5" y="1.5" width="29" height="17" rx="2" fill="url(#gb)" stroke="#7a8ca4" stroke-width="1"/>
<rect x="946" y="7.5" width="6.5" height="6" fill="none" stroke="#fff" stroke-width="2.2"/><rect x="946" y="7.5" width="6.5" height="6" fill="none" stroke="#44526a" stroke-width="0.8"/>
<path d="M948.5 6 v-2 h6.5 v6 h-2" fill="none" stroke="#fff" stroke-width="2"/><path d="M948.5 6 v-2 h6.5 v6 h-2" fill="none" stroke="#44526a" stroke-width="0.8"/>
<rect x="968.5" y="1.5" width="30" height="17" rx="2" fill="url(#gr)" stroke="#8a3a30" stroke-width="1"/>
<path d="M979 6 l8 8 M987 6 l-8 8" stroke="#fff" stroke-width="2.6"/><line x1="59.5" y1="42" x2="59.5" y2="58" stroke="#b4bccb" stroke-width="1"/><line x1="60.5" y1="42" x2="60.5" y2="58" stroke="#f8fbff" stroke-width="1"/>
<line x1="116.5" y1="42" x2="116.5" y2="58" stroke="#b4bccb" stroke-width="1"/><line x1="117.5" y1="42" x2="117.5" y2="58" stroke="#f8fbff" stroke-width="1"/>
<line x1="155.5" y1="42" x2="155.5" y2="58" stroke="#b4bccb" stroke-width="1"/><line x1="156.5" y1="42" x2="156.5" y2="58" stroke="#f8fbff" stroke-width="1"/>
<line x1="234.5" y1="42" x2="234.5" y2="58" stroke="#b4bccb" stroke-width="1"/><line x1="235.5" y1="42" x2="235.5" y2="58" stroke="#f8fbff" stroke-width="1"/>
<line x1="283.5" y1="42" x2="283.5" y2="58" stroke="#b4bccb" stroke-width="1"/><line x1="284.5" y1="42" x2="284.5" y2="58" stroke="#f8fbff" stroke-width="1"/>
<line x1="361.5" y1="42" x2="361.5" y2="58" stroke="#b4bccb" stroke-width="1"/><line x1="362.5" y1="42" x2="362.5" y2="58" stroke="#f8fbff" stroke-width="1"/>
<line x1="400.5" y1="42" x2="400.5" y2="58" stroke="#b4bccb" stroke-width="1"/><line x1="401.5" y1="42" x2="401.5" y2="58" stroke="#f8fbff" stroke-width="1"/>
<line x1="468.5" y1="42" x2="468.5" y2="58" stroke="#b4bccb" stroke-width="1"/><line x1="469.5" y1="42" x2="469.5" y2="58" stroke="#f8fbff" stroke-width="1"/>
<line x1="501" y1="42" x2="501" y2="58" stroke="#b4bccb" stroke-width="1"/><line x1="502" y1="42" x2="502" y2="58" stroke="#f8fbff" stroke-width="1"/>
<line x1="557" y1="42" x2="557" y2="58" stroke="#b4bccb" stroke-width="1"/><line x1="558" y1="42" x2="558" y2="58" stroke="#f8fbff" stroke-width="1"/>
<path d="M7.5 47.5 h4 l1 1.5 h6 v6.5 h-11 z" fill="#d9a53a" stroke="#8a6418" stroke-width="1"/>
<path d="M8 55 l2.5 -5 h10 l-2.5 5 z" fill="#f4cd68" stroke="#8a6418" stroke-width="0.8"/>
<path d="M15 45.5 l2 -1.5 l3 1 l0.5 2" fill="none" stroke="#222" stroke-width="1.2"/>
<rect x="26.5" y="44.5" width="10" height="11" fill="#3e4a9a" stroke="#2a3272" stroke-width="0.8"/>
<rect x="28.5" y="45" width="6" height="4.5" fill="#f4f4f8"/>
<rect x="28.5" y="52" width="6" height="3.5" fill="#8a92c8"/>
<path d="M46 45 h7 l2 4 h-9 z" fill="#c8e0b8" stroke="#6a8a70" stroke-width="0.8"/>
<rect x="43.5" y="49" width="11.5" height="6.5" rx="1" fill="#5a8a78" stroke="#3a5a50" stroke-width="0.8"/>
<rect x="45" y="51.5" width="7" height="2.5" fill="#eef4f0"/>
<rect x="63.5" y="44" width="9" height="7.5" fill="#a2aab6"/><rect x="69" y="49" width="7.5" height="7.5" fill="#9ca4b2"/>
<rect x="81.5" y="44" width="9" height="7.5" fill="#a2aab6"/><rect x="87" y="49" width="7.5" height="7.5" fill="#9ca4b2"/>
<path d="M101 54 l5 -6" stroke="#a0a8b4" stroke-width="2"/><path d="M104 46 l3 -1 l4 3 v8 h-6 v-6 z" fill="#a0a8b4"/>
<path d="M122 55 h3 l1 -1 l1 -9 l1 9 l1 1 h3" fill="none" stroke="#7ab888" stroke-width="1.3"/>
<path d="M140 47.5 h11.5 v5 h-3 l-1 2 l-1 -2 h-6.5 z" fill="#30d8e8" stroke="#1aa0b8" stroke-width="0.6"/>
<line x1="140" y1="45" x2="140" y2="55" stroke="#111" stroke-width="1.2"/><circle cx="140" cy="45.8" r="1.6" fill="#111"/><circle cx="140" cy="54.5" r="1.6" fill="#111"/>
<circle cx="161.5" cy="45" r="1.4" fill="#111"/><circle cx="161.5" cy="50" r="1.4" fill="#111"/><circle cx="161.5" cy="55" r="1.4" fill="#111"/><line x1="161.5" y1="45" x2="161.5" y2="50" stroke="#111"/>
<path d="M164.5 51 q2 -6 4 -1 t4.5 2" fill="none" stroke="#8abf98" stroke-width="1"/>
<path d="M176.5 51 h7 l-3.5 3.5 z" fill="#111"/>
<path d="M190 47 v6.5" stroke="#111" stroke-width="1.5"/><path d="M188.5 48.5 l1.5 -2 l1.5 2 M188.5 52 l1.5 2 l1.5 -2" fill="none" stroke="#111" stroke-width="1"/>
<path d="M193 52 q2 -6 4 -1 t4.5 1" fill="none" stroke="#8abf98" stroke-width="1"/>
<path d="M205.5 51 h7 l-3.5 3.5 z" fill="#111"/>
<path d="M223 55 q4 -1 4 -4.5 q0 -4 -4 -4 q-3 0 -4 3" fill="none" stroke="#a0a8b8" stroke-width="2.2"/><path d="M218 47 l1 5 l4 -2 z" fill="#a0a8b8"/>
<rect x="240" y="43.5" width="11.5" height="7" fill="#9aa8b8" stroke="#6a7888" stroke-width="0.8"/><path d="M241 46 l2 2 l2 -3 l2 3 l2 -2" fill="none" stroke="#dfe8f0" stroke-width="0.8"/>
<path d="M239.5 55 l3 1.5 l3 -3 l3 2 l3 -3" fill="none" stroke="#4aa0c0" stroke-width="1.3"/>
<path d="M255.5 51 h7 l-3.5 3.5 z" fill="#111"/>
<rect x="268" y="44" width="12" height="7.5" fill="#a4acb8"/><path d="M270 57 l4 -5 l4 5" fill="none" stroke="#a4acb8" stroke-width="1.6"/>
<path d="M292 51.5 l4 4 l6.5 -7" fill="none" stroke="#3a5aa0" stroke-width="2.6" stroke-linejoin="round"/>
<path d="M309 51.5 l5 4.5 l5.5 -5.5" fill="none" stroke="#a4acb8" stroke-width="2.4"/><path d="M312.5 45 h3 v2.5 h2 l-3.5 3 l-3.5 -3 h2 z" fill="#a4acb8"/>
<path d="M328 51.5 l5 4.5 l5.5 -5.5" fill="none" stroke="#a4acb8" stroke-width="2.4"/><path d="M331.5 45 h3 v2.5 h2 l-3.5 3 l-3.5 -3 h2 z" fill="#a4acb8"/>
<path d="M345.5 44 h6 l3 3 v10 h-9 z" fill="#a8b0bc"/>
<rect x="366" y="44.5" width="10.5" height="11.5" fill="#e8f2e0" stroke="#556070" stroke-width="0.9" stroke-dasharray="1.2 1"/><path d="M367 53 l2.5 -6 l2.5 5 l3.5 -4" fill="none" stroke="#333" stroke-width="0.9"/>
<rect x="383" y="43.5" width="9" height="8" fill="#a8b0bc"/><path d="M389 56 l4.5 -4 q2 -2 -1 -3" fill="none" stroke="#a8b0bc" stroke-width="1.6"/>
<text x="404" y="47" font-size="4.5" fill="#223" font-family="Liberation Sans" font-weight="bold">a b c</text>
<path d="M404.5 50 h4 l1 1 h6 v5.5 h-11 z" fill="#e8c050" stroke="#8a6820" stroke-width="0.8"/><path d="M414 48 l2.5 -1.5" stroke="#111" stroke-width="1"/>
<path d="M421 51 h7 l-3.5 3.5 z" fill="#111"/>
<text x="432" y="47" font-size="4.5" fill="#a8b0bc" font-family="Liberation Sans" font-weight="bold">a b c</text><path d="M435 49 v7 l5 -3.5 z" fill="#a8b0bc"/>
<text x="450" y="47" font-size="4.5" fill="#a8b0bc" font-family="Liberation Sans" font-weight="bold">a b c</text><rect x="453" y="49.5" width="7" height="7" fill="#a8b0bc"/>
<text x="472" y="47" font-size="4.5" fill="#223" font-family="Liberation Sans" font-weight="bold">a b c</text><rect x="472" y="49" width="13" height="7.5" fill="#2a3a58"/><rect x="479" y="52" width="5" height="3" fill="#e8eef8"/>
<path d="M489.5 51 h7 l-3.5 3.5 z" fill="#111"/>
<rect x="504" y="44.5" width="13" height="11.5" fill="#a8b0bc"/><rect x="508" y="48" width="5" height="4" fill="#b8c0cc"/>
<path d="M523.5 44.5 h7 l2.5 2.5 v9.5 h-9.5 z" fill="#b0b8c4"/>
<rect x="541" y="44.5" width="11.5" height="12" fill="#a8b0bc"/><path d="M542 45.5 l9.5 10 M551.5 45.5 l-9.5 10" stroke="#bfc6d0" stroke-width="1"/>
<circle cx="568.5" cy="51.5" r="5.6" fill="#2c5aa8" stroke="#d8e2f4" stroke-width="1"/><text x="568.5" y="55" font-size="8.5" fill="#fff" text-anchor="middle" font-family="Liberation Sans" font-weight="bold">?</text><circle cx="11" cy="73" r="6" fill="#f8d0d8" stroke="#d0364a" stroke-width="2"/><line x1="11" y1="68" x2="11" y2="74.5" stroke="#c02034" stroke-width="2.2"/>
<path d="M5 95 q2 -5 6.5 -5 q5 0 6.5 5 z" fill="#e8cf90" stroke="#9a7a40" stroke-width="0.8"/>
<path d="M6 93 l6 -6" stroke="#222" stroke-width="1.8"/><path d="M9 85.5 l4 -1 l3 3 l-2 2 z" fill="#222"/>
<path d="M119.5 69.5 v8 l4.5 -4 z" fill="#a8b0bf"/>
<path d="M119.5 87 v8 l4.5 -4 z" fill="#a8b0bf"/>
<circle cx="12" cy="109" r="4" fill="#dfeefa" stroke="#4a6a8a" stroke-width="1.5"/><line x1="9" y1="112" x2="5" y2="116.5" stroke="#5a6a7a" stroke-width="2.2"/>
<rect x="61.5" y="104" width="9" height="5" fill="none" stroke="#9aa4b4" stroke-width="0.7" stroke-dasharray="1 1"/><path d="M62.5 112 l3.5 -4 l3.5 4 z" fill="none" stroke="#222" stroke-width="0.9"/>
<path d="M61.5 115 h9.5 M61.5 115 l2 -1.6 v3.2 z M71 115 l-2 -1.6 v3.2 z" fill="#111" stroke="#111" stroke-width="1.1"/>
<path d="M118.5 106 v8 l-4 -4 z M123.5 106 v8 l4 -4 z" fill="#a8b0bf"/><line x1="121.0" y1="106" x2="121.0" y2="114" stroke="#c4cad4" stroke-width="1"/>
<path d="M12 127.5 l1.5 0 l3.5 3.5 l-3.5 3.5 l-1.5 0 l1 -3.5z" fill="#4a6a92"/>
<polygon points="32.82,133.41 29.41,136.82 24.59,136.82 21.18,133.41 21.18,128.59 24.59,125.18 29.41,125.18 32.82,128.59" fill="#f4f6fa" stroke="#4a5e7a" stroke-width="1.2"/><text x="27" y="134.6" font-size="9.5" fill="#111" text-anchor="middle" font-family="Liberation Serif" font-weight="bold">1</text><path d="M18.7 131 l2 -2 l2 2 l-2 2 z" fill="#4a6a92"/>
<path d="M35.5 130.5 q1.5 -6 3 -5 q1.5 1 2.5 5" fill="none" stroke="#2e8a3e" stroke-width="2.2"/><path d="M42.5 132.5 q1.5 6 3 3 q1 -2 1.5 -6" fill="none" stroke="#a0b0c0" stroke-width="0.9"/><line x1="35.5" y1="136.5" x2="46.5" y2="125.5" stroke="#333" stroke-width="0.9"/>
<path d="M12 145.5 l1.5 0 l3.5 3.5 l-3.5 3.5 l-1.5 0 l1 -3.5z" fill="#4a6a92"/>
<polygon points="32.82,151.41 29.41,154.82 24.59,154.82 21.18,151.41 21.18,146.59 24.59,143.18 29.41,143.18 32.82,146.59" fill="#f4f6fa" stroke="#4a5e7a" stroke-width="1.2"/><text x="27" y="152.6" font-size="9.5" fill="#111" text-anchor="middle" font-family="Liberation Serif" font-weight="bold">2</text><path d="M18.7 149 l2 -2 l2 2 l-2 2 z" fill="#4a6a92"/>
<path d="M35.5 148.5 q1.5 -6 3 -5 q1.5 1 2.5 5" fill="none" stroke="#2e8a3e" stroke-width="2.2"/><path d="M42.5 150.5 q1.5 6 3 3 q1 -2 1.5 -6" fill="none" stroke="#a0b0c0" stroke-width="0.9"/><line x1="35.5" y1="154.5" x2="46.5" y2="143.5" stroke="#333" stroke-width="0.9"/>
<path d="M8.4 135.6 V126.6 L5.6 129.2" fill="none" stroke="#151a22" stroke-width="2"/>
<path d="M118.5 126 v8 l-4 -4 z M123.5 126 v8 l4 -4 z" fill="#a8b0bf"/><line x1="121.0" y1="126" x2="121.0" y2="134" stroke="#c4cad4" stroke-width="1"/>
<path d="M113 150 l3 -4 l3 4 z M116 150 v3" fill="#222" stroke="#222" stroke-width="1.2"/>
<path d="M124.5 144.5 v9 l5.5 -4.5 z" fill="#111"/>
<path d="M6.5 170.5 q-1.5 -4 1 -7 q2 -1.5 3.5 1 q1.5 -2.5 3.5 -1 q2.5 3 1 7 q-1.5 1 -2.5 0 l-1 -3 h-2 l-1 3 q-1 1 -2.5 0z" fill="#c8ccd4" stroke="#2a2a2a" stroke-width="1.1"/>
<path d="M5 175 q3 -4 6 0 t6 0" fill="none" stroke="#3a9a58" stroke-width="0.9"/>
<path d="M26.5 166 l1.5 0 l3.5 3.5 l-3.5 3.5 l-1.5 0 l1 -3.5z" fill="#4a6a92"/>
<path d="M22.9 174.2 V164.2 L20.1 166.8" fill="none" stroke="#151a22" stroke-width="2"/>
<path d="M37.5 172 l4 -4 l4 4 z" fill="#111"/><path d="M38 174 h3.5 v-10 h4" fill="none" stroke="#3a9a58" stroke-width="1"/>
<path d="M51 170 l2 -2 l2 2 l-2 2 z" fill="#111"/><path d="M55 175 q2 -2 2.5 -5 q0.5 -5 3 -6" fill="none" stroke="#7abf8a" stroke-width="1"/>
<path d="M119.5 165 v8 l4.5 -4 z" fill="#a8b0bf"/>
<path d="M8 188 q2.5 -8 5 -3 q1.5 4 4 5" fill="none" stroke="#5aaf6a" stroke-width="1"/><circle cx="6.5" cy="189" r="1.3" fill="#222"/><circle cx="6" cy="192.5" r="1.1" fill="#222"/><circle cx="10" cy="192.5" r="1" fill="#888"/><circle cx="17" cy="192.5" r="1.2" fill="#222"/>
<path d="M118.5 183 v8 l-4 -4 z M123.5 183 v8 l4 -4 z" fill="#a8b0bf"/><line x1="121.0" y1="183" x2="121.0" y2="191" stroke="#c4cad4" stroke-width="1"/>
<path d="M118.5 203 v8 l-4 -4 z M123.5 203 v8 l4 -4 z" fill="#a8b0bf"/><line x1="121.0" y1="203" x2="121.0" y2="211" stroke="#c4cad4" stroke-width="1"/>
<path d="M118.5 220.5 v8 l-4 -4 z M123.5 220.5 v8 l4 -4 z" fill="#a8b0bf"/><line x1="121.0" y1="220.5" x2="121.0" y2="228.5" stroke="#c4cad4" stroke-width="1"/>
<path d="M119.5 239 v8 l4.5 -4 z" fill="#a8b0bf"/></svg>
<div class="a" style="left:982px;top:61px;width:17px;height:666px;background:linear-gradient(90deg,#e8e8e8,#f4f4f4 30%,#f0f0f0)"></div>
<div class="a" style="left:135px;top:727px;width:864px;height:18px;background:linear-gradient(#e8e8e8,#f4f4f4 30%,#f0f0f0)"></div>
<div class="a" style="left:998px;top:61px;width:2px;height:684px;background:#dcdcdc"></div>
<svg class="a" style="left:0;top:0" width="1000" height="770" viewBox="0 0 1000 770">
<defs><linearGradient id="th" x1="0" y1="0" x2="0" y2="1"><stop offset="0" stop-color="#f6f6f6"/><stop offset="0.5" stop-color="#e6e6e6"/><stop offset="1" stop-color="#d4d4d4"/></linearGradient>
<linearGradient id="tv" x1="0" y1="0" x2="1" y2="0"><stop offset="0" stop-color="#f6f6f6"/><stop offset="0.5" stop-color="#e6e6e6"/><stop offset="1" stop-color="#d4d4d4"/></linearGradient></defs>
<rect x="763.5" y="729.5" width="139" height="13" rx="2" fill="url(#th)" stroke="#a4a4a4"/>
<path d="M830.5 733.5v5M833.5 733.5v5M836.5 733.5v5" stroke="#707070" stroke-width="1"/>
<path d="M145 732.5v6l-3.5 -3z" fill="#606060"/>
<path d="M972 732.5v6l3.5 -3z" fill="#606060"/>
<rect x="983.5" y="395.5" width="13.5" height="16" rx="1.5" fill="url(#tv)" stroke="#bcbcbc"/>
<path d="M987.5 400.5h6M987.5 403.5h6M987.5 406.5h6" stroke="#9a9a9a" stroke-width="1"/>
<path d="M986.5 72.5h7l-3.5 -4z" fill="#505050"/>
<path d="M986.5 715.5h7l-3.5 4z" fill="#505050"/>
</svg>
<div class="a" style="left:135px;top:60px;width:865px;height:1px;background:#7d8696"></div>
<div class="a" style="left:0;top:745px;width:1000px;height:18px;background:#f1eff0;border-top:1px solid #c5c9d0"></div>
<div class="a t" style="left:1.2px;top:750.1px;font-size:13px;line-height:13px;color:#1e1e1e;transform:scaleX(0.9077);transform-origin:0 0;">Управление</div>
<div class="a t" style="left:72px;top:750.1px;font-size:13px;line-height:13px;color:#1e1e1e;transform:scaleX(0.8891);transform-origin:0 0;">каналом</div>
<div class="a t" style="left:122px;top:750.1px;font-size:13px;line-height:13px;color:#1e1e1e;transform:scaleX(0.9959);transform-origin:0 0;">2</div>
<div class="a t" style="left:132.8px;top:750.1px;font-size:13px;line-height:13px;color:#1e1e1e;transform:scaleX(0.8591);transform-origin:0 0;">осциллографа.</div>
<div class="a t" style="left:215.6px;top:750.1px;font-size:13px;line-height:13px;color:#1e1e1e;transform:scaleX(0.9006);transform-origin:0 0;">&lt;Используйте</div>
<div class="a t" style="left:295px;top:750.1px;font-size:13px;line-height:13px;color:#1e1e1e;transform:scaleX(0.8750);transform-origin:0 0;">стрелку</div>
<div class="a t" style="left:339px;top:750.1px;font-size:13px;line-height:13px;color:#1e1e1e;transform:scaleX(0.9105);transform-origin:0 0;">вправо</div>
<div class="a t" style="left:381px;top:750.1px;font-size:13px;line-height:13px;color:#1e1e1e;transform:scaleX(0.8465);transform-origin:0 0;">для</div>
<div class="a t" style="left:403.2px;top:750.1px;font-size:13px;line-height:13px;color:#1e1e1e;transform:scaleX(0.9370);transform-origin:0 0;">отображения</div>
<div class="a t" style="left:480.5px;top:750.1px;font-size:13px;line-height:13px;color:#1e1e1e;transform:scaleX(0.9050);transform-origin:0 0;">панели</div>
<div class="a t" style="left:523.2px;top:750.1px;font-size:13px;line-height:13px;color:#1e1e1e;transform:scaleX(0.9210);transform-origin:0 0;">управления</div>
<div class="a t" style="left:592px;top:750.1px;font-size:13px;line-height:13px;color:#1e1e1e;transform:scaleX(0.8956);transform-origin:0 0;">или</div>
<div class="a t" style="left:614.8px;top:750.1px;font-size:13px;line-height:13px;color:#1e1e1e;transform:scaleX(0.9211);transform-origin:0 0;">удержите</div>
<div class="a t" style="left:669.5px;top:750.1px;font-size:13px;line-height:13px;color:#1e1e1e;transform:scaleX(0.9704);transform-origin:0 0;">кнопку</div>
<div class="a t" style="left:711px;top:750.1px;font-size:13px;line-height:13px;color:#1e1e1e;transform:scaleX(0.8895);transform-origin:0 0;">влево</div>
<div class="a t" style="left:747px;top:750.1px;font-size:13px;line-height:13px;color:#1e1e1e;transform:scaleX(0.9712);transform-origin:0 0;">Полное</div>
<div class="a t" style="left:792.5px;top:750.1px;font-size:13px;line-height:13px;color:#1e1e1e;transform:scaleX(0.9105);transform-origin:0 0;">время</div>
<div class="a t" style="left:829px;top:750.1px;font-size:13px;line-height:13px;color:#1e1e1e;transform:scaleX(0.8392);transform-origin:0 0;">файла:</div>
<div class="a t" style="left:868.2px;top:750.1px;font-size:13px;line-height:13px;color:#1e1e1e;transform:scaleX(0.8309);transform-origin:0 0;">000:00:12.408.144</div>
<div class="a" style="left:744px;top:747px;width:1px;height:15px;background:#d4d4d8"></div>
<div class="a" style="left:0;top:763px;width:1000px;height:7px;background:linear-gradient(#6a84a2,#7d94ae);border-top:1px solid #4a5a70"></div>
<svg class="a" style="left:0;top:0" width="1000" height="770" viewBox="0 0 1000 770">
<circle cx="26" cy="776" r="11.5" fill="#c0d0e0" stroke="#2e3e54" stroke-width="1.2"/>
<rect x="55.5" y="764.5" width="48.5" height="8" rx="2" fill="#d4e0ea" stroke="#4a5a74"/>
<rect x="68" y="767" width="14" height="5" fill="#d8c870"/>
<circle cx="136" cy="777" r="9" fill="#e02818"/>
<rect x="184" y="767" width="3" height="5" fill="#1e2e44"/><rect x="190" y="765" width="3" height="7" fill="#1e2e44"/>
<rect x="221.5" y="764.5" width="52" height="8" rx="2" fill="#d0dce8" stroke="#4a5a74"/>
<rect x="232" y="767.5" width="30" height="5" fill="#fafafa"/>
<rect x="277.5" y="764.5" width="43" height="8" rx="2" fill="#d0dce8" stroke="#4a5a74"/>
<rect x="283" y="767" width="30" height="5" fill="#151515"/>
<rect x="329.5" y="764.5" width="52" height="8" rx="2" fill="#c4d2e0" stroke="#4a5a74"/>
<rect x="364" y="768" width="6" height="4" fill="#e8c070"/>
<rect x="385.5" y="764.5" width="51" height="8" rx="2" fill="#c4d2e0" stroke="#4a5a74"/>
<rect x="396" y="768" width="6" height="4" fill="#3a6aa8"/><rect x="420" y="768" width="5" height="4" fill="#3a6aa8"/>
<rect x="988" y="764" width="12" height="6" fill="#6a7e98"/>
</svg>
</body></html>
